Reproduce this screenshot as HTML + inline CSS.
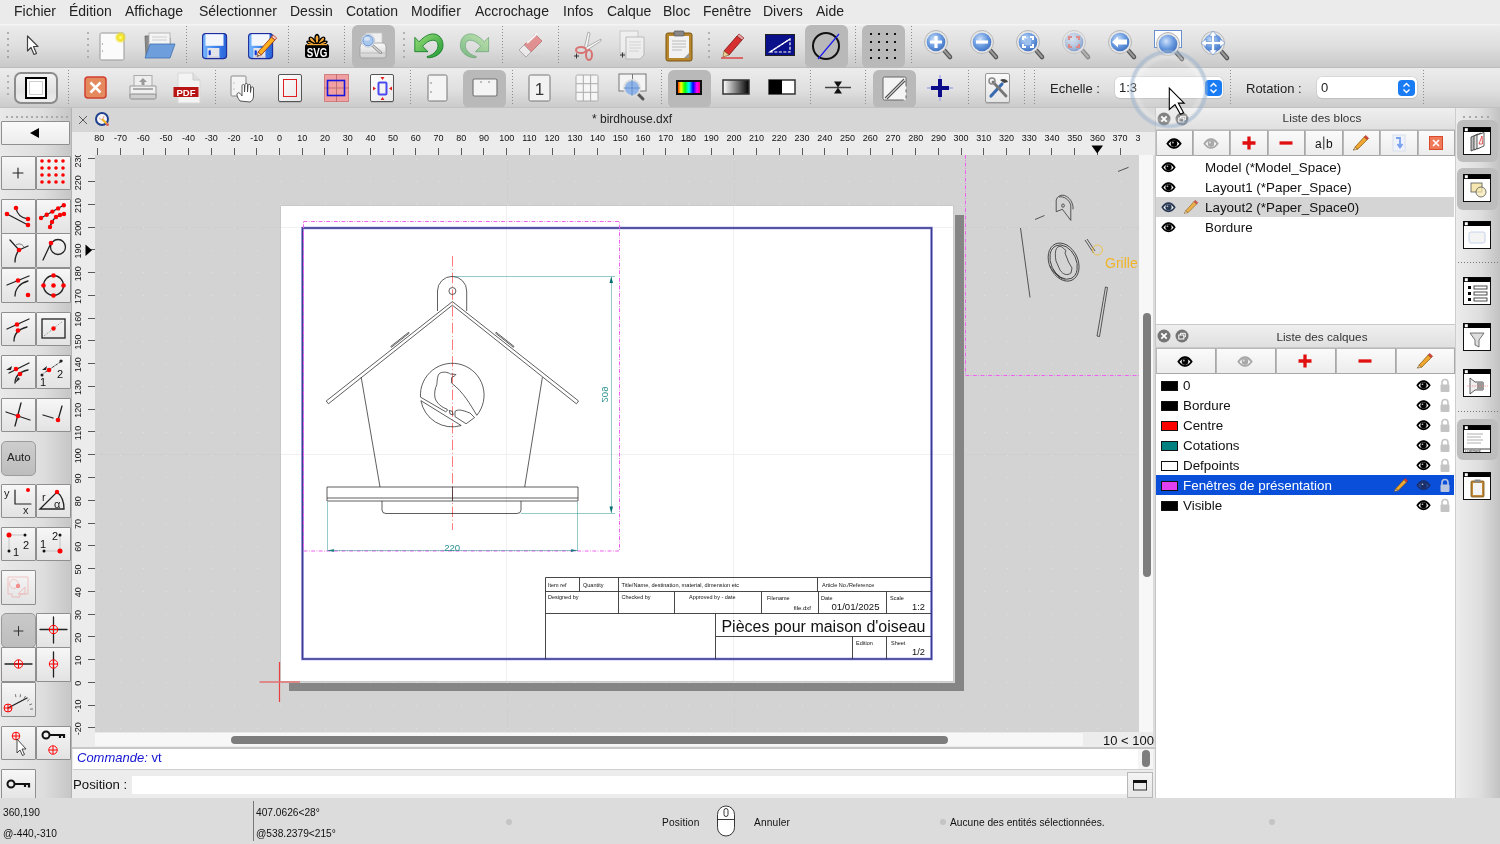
<!DOCTYPE html><html><head><meta charset="utf-8"><style>
*{margin:0;padding:0;box-sizing:border-box}
html,body{width:1500px;height:844px;overflow:hidden;background:#ececec;font-family:"Liberation Sans",sans-serif}
.t{position:absolute;white-space:nowrap;will-change:transform}
svg{position:absolute;overflow:visible;will-change:transform}
</style></head><body><div style="position:absolute;left:0px;top:0px;width:1500px;height:24px;background:#ebebeb"></div>
<div class="t" style="left:14px;top:4.45px;font-size:14px;line-height:14px;color:#222;">Fichier</div>
<div class="t" style="left:69px;top:4.45px;font-size:14px;line-height:14px;color:#222;">Édition</div>
<div class="t" style="left:125px;top:4.45px;font-size:14px;line-height:14px;color:#222;">Affichage</div>
<div class="t" style="left:199px;top:4.45px;font-size:14px;line-height:14px;color:#222;">Sélectionner</div>
<div class="t" style="left:290px;top:4.45px;font-size:14px;line-height:14px;color:#222;">Dessin</div>
<div class="t" style="left:346px;top:4.45px;font-size:14px;line-height:14px;color:#222;">Cotation</div>
<div class="t" style="left:411px;top:4.45px;font-size:14px;line-height:14px;color:#222;">Modifier</div>
<div class="t" style="left:475px;top:4.45px;font-size:14px;line-height:14px;color:#222;">Accrochage</div>
<div class="t" style="left:563px;top:4.45px;font-size:14px;line-height:14px;color:#222;">Infos</div>
<div class="t" style="left:607px;top:4.45px;font-size:14px;line-height:14px;color:#222;">Calque</div>
<div class="t" style="left:663px;top:4.45px;font-size:14px;line-height:14px;color:#222;">Bloc</div>
<div class="t" style="left:703px;top:4.45px;font-size:14px;line-height:14px;color:#222;">Fenêtre</div>
<div class="t" style="left:763px;top:4.45px;font-size:14px;line-height:14px;color:#222;">Divers</div>
<div class="t" style="left:816px;top:4.45px;font-size:14px;line-height:14px;color:#222;">Aide</div>
<div style="position:absolute;left:0px;top:24px;width:1500px;height:44px;background:linear-gradient(to bottom,#f4f4f4 0,#f4f4f4 1px,#ebebeb 2px,#dfdfdf 50%,#c9c9c9 100%);border-bottom:1px solid #bcbcbc"></div>
<div style="position:absolute;left:7px;top:32px;width:2px;height:2px;background:#9a9a9a;border-radius:1px"></div><div style="position:absolute;left:7px;top:38px;width:2px;height:2px;background:#9a9a9a;border-radius:1px"></div><div style="position:absolute;left:7px;top:44px;width:2px;height:2px;background:#9a9a9a;border-radius:1px"></div><div style="position:absolute;left:7px;top:50px;width:2px;height:2px;background:#9a9a9a;border-radius:1px"></div><div style="position:absolute;left:7px;top:56px;width:2px;height:2px;background:#9a9a9a;border-radius:1px"></div>
<svg style="position:absolute;left:26px;top:35px;" width="14" height="22" viewBox="0 0 14 22"><path d="M1.5 1 L1.5 16 L5 12.5 L8 19.5 L10.5 18.5 L7.5 11.5 L12 11.5 Z" fill="#fff" stroke="#444" stroke-width="1.2" stroke-linejoin="round"/></svg>
<div style="position:absolute;left:87px;top:32px;width:2px;height:2px;background:#a0a0a0;border-radius:1px"></div><div style="position:absolute;left:87px;top:38px;width:2px;height:2px;background:#a0a0a0;border-radius:1px"></div><div style="position:absolute;left:87px;top:44px;width:2px;height:2px;background:#a0a0a0;border-radius:1px"></div><div style="position:absolute;left:87px;top:50px;width:2px;height:2px;background:#a0a0a0;border-radius:1px"></div><div style="position:absolute;left:87px;top:56px;width:2px;height:2px;background:#a0a0a0;border-radius:1px"></div>
<svg style="position:absolute;left:99px;top:31px;" width="28" height="30" viewBox="0 0 28 30"><defs><radialGradient id="glow"><stop offset="0" stop-color="#ffff80"/><stop offset="0.5" stop-color="#f0e020"/><stop offset="1" stop-color="#f0e020" stop-opacity="0"/></radialGradient></defs>
<rect x="1" y="2" width="24" height="27" rx="1.5" fill="#f6f6f6" stroke="#9a9a9a"/><rect x="2" y="3" width="22" height="25" fill="#fbfbfb"/>
<circle cx="3.5" cy="13" r="0.7" fill="#999"/><circle cx="3.5" cy="20" r="0.7" fill="#999"/>
<circle cx="21.5" cy="6.5" r="6" fill="url(#glow)"/></svg>
<svg style="position:absolute;left:142px;top:32px;" width="34" height="28" viewBox="0 0 34 28"><path d="M3 4 L14 4 L16 6 L28 6 L28 24 L4 24 Z" fill="#8a8a8a" stroke="#666" stroke-width="0.8"/>
<rect x="7" y="1" width="21" height="14" fill="#f4f4f4" stroke="#aaa" stroke-width="0.8"/><line x1="10" y1="5" x2="25" y2="5" stroke="#ccc"/><line x1="10" y1="8" x2="25" y2="8" stroke="#ccc"/>
<path d="M8 12 L33 12 L28 26 L3 26 Z" fill="#6e9fdc" stroke="#3f6fb0" stroke-width="0.8"/></svg>
<div style="position:absolute;left:186px;top:26px;width:1px;height:39px;background:repeating-linear-gradient(to bottom,#8c8c8c 0 1px,transparent 1px 3px)"></div>
<svg style="position:absolute;left:202px;top:33px;" width="30" height="28" viewBox="0 0 30 28"><defs><linearGradient id="fg202" x1="0" y1="0" x2="1" y2="0"><stop offset="0" stop-color="#7ab8ff"/><stop offset="0.5" stop-color="#3f86f0"/><stop offset="1" stop-color="#2a64d8"/></linearGradient></defs>
<rect x="0.6" y="0.6" width="24" height="25" rx="3" fill="url(#fg202)" stroke="#1c2c9c" stroke-width="1.1"/>
<rect x="3.5" y="1.2" width="18" height="11.6" fill="#f4f6fd"/><rect x="5.4" y="15" width="12" height="10" fill="#e4e4ea"/><rect x="6.6" y="17.2" width="2.2" height="5" rx="0.8" fill="#0a3ad8"/><rect x="5.4" y="23.5" width="12" height="1.5" fill="#c8c8d8"/></svg>
<svg style="position:absolute;left:248px;top:33px;" width="30" height="28" viewBox="0 0 30 28"><defs><linearGradient id="fg248" x1="0" y1="0" x2="1" y2="0"><stop offset="0" stop-color="#7ab8ff"/><stop offset="0.5" stop-color="#3f86f0"/><stop offset="1" stop-color="#2a64d8"/></linearGradient></defs>
<rect x="0.6" y="0.6" width="24" height="25" rx="3" fill="url(#fg248)" stroke="#1c2c9c" stroke-width="1.1"/>
<rect x="3.5" y="1.2" width="18" height="11.6" fill="#f4f6fd"/><rect x="5.4" y="15" width="12" height="10" fill="#e4e4ea"/><rect x="6.6" y="17.2" width="2.2" height="5" rx="0.8" fill="#0a3ad8"/><rect x="5.4" y="23.5" width="12" height="1.5" fill="#c8c8d8"/><path d="M10 19 L23.5 4 L27 7 L13.2 22 Z" fill="#ffb020" stroke="#8a2a10" stroke-width="0.8"/><path d="M23.5 4 L25.2 2 L28.7 5 L27 7 Z" fill="#f0d0c0" stroke="#b03020" stroke-width="0.8"/><path d="M10 19 L13.2 22 L9 23.5 Z" fill="#f8e0b0" stroke="#8a2a10" stroke-width="0.6"/><path d="M9 23.5 L10.3 21.8 L10.8 22.8 Z" fill="#222"/></svg>
<div style="position:absolute;left:288px;top:26px;width:1px;height:39px;background:repeating-linear-gradient(to bottom,#8c8c8c 0 1px,transparent 1px 3px)"></div>
<svg style="position:absolute;left:300px;top:30px;" width="36" height="32" viewBox="0 0 36 32"><g transform="translate(-300 -30)">
<g fill="#f7a934" stroke="#000" stroke-width="1.3" stroke-linejoin="round">
<path d="M317 45 C 314 41, 314.5 35, 317 34.5 C 319.5 35, 320 41, 317 45 Z"/>
<path d="M317 45 C 312 43.5, 308 40, 309.5 37.5 C 311.5 36, 315 40, 317 45 Z"/>
<path d="M317 45 C 322 43.5, 326 40, 324.5 37.5 C 322.5 36, 319 40, 317 45 Z"/>
<path d="M317 45 C 311 45, 306.5 43.5, 307 41.5 C 308.5 40, 313 42.5, 317 45 Z"/>
<path d="M317 45 C 323 45, 327.5 43.5, 327 41.5 C 325.5 40, 321 42.5, 317 45 Z"/>
</g>
<rect x="305" y="44" width="24" height="14" rx="2.5" fill="#000"/>
<rect x="307" y="44" width="20" height="1.2" fill="#f7a934"/>
<text transform="translate(317 56.7) scale(0.78 1)" text-anchor="middle" font-family="Liberation Sans" font-weight="bold" font-size="12.6" fill="#fff">SVG</text>
</g></svg>
<div style="position:absolute;left:344px;top:26px;width:1px;height:39px;background:repeating-linear-gradient(to bottom,#8c8c8c 0 1px,transparent 1px 3px)"></div>
<div style="position:absolute;left:352px;top:25px;width:43px;height:43px;background:#b9b9b9;border-radius:6px"></div>
<svg style="position:absolute;left:355px;top:30px;" width="36" height="32" viewBox="0 0 36 32"><g transform="translate(-355 -30)">
<defs><linearGradient id="prg" x1="0" y1="0" x2="0" y2="1"><stop offset="0" stop-color="#fafafa"/><stop offset="1" stop-color="#d0d0d0"/></linearGradient></defs>
<rect x="366" y="33" width="16" height="13" fill="#f0f0f0" stroke="#c8c8c8" stroke-width="0.8"/>
<path d="M360 47 Q360 43 363 43 H383 Q386 43 386 47 V56 Q386 58 384 58 H362 Q360 58 360 56 Z" fill="url(#prg)" stroke="#9a9a9a" stroke-width="0.8"/>
<path d="M361 53 H385" stroke="#aaa" stroke-width="0.7"/>
<line x1="372" y1="45" x2="380.5" y2="52.5" stroke="#8a8a8a" stroke-width="3" stroke-linecap="round"/>
<line x1="372" y1="45" x2="380.5" y2="52.5" stroke="#d8d8d8" stroke-width="1.2" stroke-linecap="round"/>
<circle cx="368" cy="40.6" r="6.6" fill="#eef2f8" stroke="#b8c0cc" stroke-width="0.8"/>
<circle cx="368" cy="40.6" r="5.2" fill="#a9c6ec" stroke="#5d8fd0" stroke-width="0.9"/>
<ellipse cx="367" cy="38.8" rx="3" ry="2" fill="#dde9f8" opacity="0.8"/>
</g></svg>
<div style="position:absolute;left:403px;top:32px;width:2px;height:2px;background:#a0a0a0;border-radius:1px"></div><div style="position:absolute;left:403px;top:38px;width:2px;height:2px;background:#a0a0a0;border-radius:1px"></div><div style="position:absolute;left:403px;top:44px;width:2px;height:2px;background:#a0a0a0;border-radius:1px"></div><div style="position:absolute;left:403px;top:50px;width:2px;height:2px;background:#a0a0a0;border-radius:1px"></div><div style="position:absolute;left:403px;top:56px;width:2px;height:2px;background:#a0a0a0;border-radius:1px"></div>
<svg style="position:absolute;left:410px;top:28px;" width="90" height="36" viewBox="0 0 90 36"><defs><linearGradient id="ugr" x1="0" y1="0" x2="1" y2="1"><stop offset="0" stop-color="#9ade78"/><stop offset="1" stop-color="#1f9a35"/></linearGradient></defs><g transform="scale(0.06)"><path d="M80 155 L80 395 L300 395 L210 305 C260 250, 320 200, 400 205 C470 215, 480 300, 450 360 C410 430, 340 465, 285 475 L290 495 C380 500, 470 460, 520 390 C570 320, 560 190, 480 130 C400 70, 280 90, 150 230 Z" fill="url(#ugr)" stroke="#137a25" stroke-width="14"/><g transform="translate(1390 0) scale(-1 1)" opacity="0.5"><path d="M80 155 L80 395 L300 395 L210 305 C260 250, 320 200, 400 205 C470 215, 480 300, 450 360 C410 430, 340 465, 285 475 L290 495 C380 500, 470 460, 520 390 C570 320, 560 190, 480 130 C400 70, 280 90, 150 230 Z" fill="url(#ugr)" stroke="#137a25" stroke-width="14"/></g></g></svg>
<div style="position:absolute;left:502px;top:26px;width:1px;height:39px;background:repeating-linear-gradient(to bottom,#8c8c8c 0 1px,transparent 1px 3px)"></div>
<svg style="position:absolute;left:515px;top:30px;" width="32" height="32" viewBox="0 0 32 32"><g opacity="0.62"><ellipse cx="17" cy="26.5" rx="11" ry="1.6" fill="#d0d0d0"/><path d="M4 20 L20 4 L27 11 L11 27 Z" fill="#e06060" stroke="#a03030" stroke-width="0.8"/><path d="M4 20 L9 15 L16 22 L11 27 Z" fill="#f6f6f6" stroke="#888" stroke-width="0.8"/><path d="M12 13 L22 3.5" stroke="#fff" stroke-width="2.2"/></g></svg>
<div style="position:absolute;left:558px;top:26px;width:1px;height:39px;background:repeating-linear-gradient(to bottom,#8c8c8c 0 1px,transparent 1px 3px)"></div>
<svg style="position:absolute;left:572px;top:30px;" width="30" height="32" viewBox="0 0 30 32"><g opacity="0.75"><path d="M12 19 L16 2 L18 3 L15 19" fill="#fff" stroke="#888" stroke-width="0.8"/><path d="M13 18 L29 9 L29 11 L15 20" fill="#fff" stroke="#888" stroke-width="0.8"/>
<ellipse cx="9" cy="20" rx="5" ry="3" fill="none" stroke="#d85050" stroke-width="2"/><ellipse cx="17" cy="25" rx="3" ry="5" fill="none" stroke="#d85050" stroke-width="2"/></g>
<path d="M2 26 h5 M4.5 23.5 v5" stroke="#333" stroke-width="1"/></svg>
<svg style="position:absolute;left:617px;top:30px;" width="32" height="32" viewBox="0 0 32 32"><g opacity="0.7"><rect x="3" y="1" width="18" height="22" fill="#f4f4f4" stroke="#bbb"/><path d="M9 7 L27 7 L27 25 L23 29 L9 29 Z" fill="#f6f6f6" stroke="#aaa"/><path d="M12 12h12M12 15h12M12 18h12M12 21h10" stroke="#ccc"/></g>
<path d="M3 25 h5 M5.5 22.5 v5" stroke="#333" stroke-width="1"/></svg>
<svg style="position:absolute;left:664px;top:30px;" width="30" height="32" viewBox="0 0 30 32"><rect x="2" y="3" width="26" height="28" rx="2" fill="#b8862c" stroke="#7a5510"/><rect x="5" y="6" width="20" height="22" fill="#f2f2f2"/>
<rect x="10" y="1" width="10" height="5" rx="1" fill="#888" stroke="#555" stroke-width="0.7"/><path d="M8 11h14M8 14h14M8 17h14M8 20h10" stroke="#bbb"/><path d="M20 28 L25 23 L25 28 Z" fill="#999"/></svg>
<div style="position:absolute;left:708px;top:32px;width:2px;height:2px;background:#a0a0a0;border-radius:1px"></div><div style="position:absolute;left:708px;top:38px;width:2px;height:2px;background:#a0a0a0;border-radius:1px"></div><div style="position:absolute;left:708px;top:44px;width:2px;height:2px;background:#a0a0a0;border-radius:1px"></div><div style="position:absolute;left:708px;top:50px;width:2px;height:2px;background:#a0a0a0;border-radius:1px"></div><div style="position:absolute;left:708px;top:56px;width:2px;height:2px;background:#a0a0a0;border-radius:1px"></div>
<svg style="position:absolute;left:720px;top:33px;" width="28" height="26" viewBox="0 0 28 26"><path d="M4 18 L17 3 L22 7 L9 22 Z" fill="#d83030" stroke="#7a1010" stroke-width="0.8"/><path d="M17 3 L19 1 L24 5 L22 7 Z" fill="#e8a0a0" stroke="#7a1010" stroke-width="0.6"/><path d="M4 18 L9 22 L3 24 Z" fill="#f0d0a0" stroke="#7a5010" stroke-width="0.6"/><path d="M1 25 h22" stroke="#e02020" stroke-width="1.2"/></svg>
<svg style="position:absolute;left:765px;top:34px;" width="30" height="24" viewBox="0 0 30 24"><rect x="0.5" y="0.5" width="29" height="21" fill="#0a0f8a" stroke="#222" stroke-width="1"/><path d="M5 18 L25 5 L25 18 Z" fill="none" stroke="#fff" stroke-width="1.2" stroke-dasharray="3 1.5"/><path d="M5 18 L25 5" stroke="#fff" stroke-width="1.3"/></svg>
<div style="position:absolute;left:805px;top:25px;width:43px;height:43px;background:#b9b9b9;border-radius:6px"></div>
<svg style="position:absolute;left:811px;top:31px;" width="32" height="30" viewBox="0 0 32 30"><circle cx="15" cy="15" r="13" fill="none" stroke="#111" stroke-width="2"/><line x1="7" y1="28" x2="28" y2="3" stroke="#1a1af0" stroke-width="1.2"/></svg>
<div style="position:absolute;left:855px;top:26px;width:1px;height:39px;background:repeating-linear-gradient(to bottom,#8c8c8c 0 1px,transparent 1px 3px)"></div>
<div style="position:absolute;left:862px;top:25px;width:43px;height:43px;background:#b9b9b9;border-radius:6px"></div>
<svg style="position:absolute;left:862px;top:25px;" width="43" height="43" viewBox="0 0 43 43"><rect x="8" y="8" width="2" height="2" fill="#111"/><rect x="8" y="16" width="2" height="2" fill="#111"/><rect x="8" y="24" width="2" height="2" fill="#111"/><rect x="8" y="32" width="2" height="2" fill="#111"/><rect x="16" y="8" width="2" height="2" fill="#111"/><rect x="16" y="16" width="2" height="2" fill="#111"/><rect x="16" y="24" width="2" height="2" fill="#111"/><rect x="16" y="32" width="2" height="2" fill="#111"/><rect x="24" y="8" width="2" height="2" fill="#111"/><rect x="24" y="16" width="2" height="2" fill="#111"/><rect x="24" y="24" width="2" height="2" fill="#111"/><rect x="24" y="32" width="2" height="2" fill="#111"/><rect x="32" y="8" width="2" height="2" fill="#111"/><rect x="32" y="16" width="2" height="2" fill="#111"/><rect x="32" y="24" width="2" height="2" fill="#111"/><rect x="32" y="32" width="2" height="2" fill="#111"/></svg>
<div style="position:absolute;left:911px;top:26px;width:1px;height:39px;background:repeating-linear-gradient(to bottom,#8c8c8c 0 1px,transparent 1px 3px)"></div>
<svg style="position:absolute;left:922.5px;top:29px;" width="30" height="30" viewBox="0 0 30 30">
<defs><radialGradient id="mg935" cx="40%" cy="35%" r="70%"><stop offset="0" stop-color="#cfe2fa"/><stop offset="0.55" stop-color="#6a9be0"/><stop offset="1" stop-color="#3d6fc0"/></radialGradient></defs>
<line x1="20" y1="20" x2="27" y2="28" stroke="#555" stroke-width="4.5" stroke-linecap="round"/>
<line x1="20" y1="20" x2="27" y2="28" stroke="#999" stroke-width="2" stroke-linecap="round"/>
<circle cx="13" cy="13" r="11.5" fill="#e6e6e6" stroke="#b5b5b5" stroke-width="1"/>
<circle cx="13" cy="13" r="9.3" fill="url(#mg935)"/>
<path d="M13 7 V19 M7 13 H19" stroke="#fff" stroke-width="3.2"/></svg>
<svg style="position:absolute;left:968.5px;top:29px;" width="30" height="30" viewBox="0 0 30 30">
<defs><radialGradient id="mg981" cx="40%" cy="35%" r="70%"><stop offset="0" stop-color="#cfe2fa"/><stop offset="0.55" stop-color="#6a9be0"/><stop offset="1" stop-color="#3d6fc0"/></radialGradient></defs>
<line x1="20" y1="20" x2="27" y2="28" stroke="#555" stroke-width="4.5" stroke-linecap="round"/>
<line x1="20" y1="20" x2="27" y2="28" stroke="#999" stroke-width="2" stroke-linecap="round"/>
<circle cx="13" cy="13" r="11.5" fill="#e6e6e6" stroke="#b5b5b5" stroke-width="1"/>
<circle cx="13" cy="13" r="9.3" fill="url(#mg981)"/>
<path d="M7 13 H19" stroke="#fff" stroke-width="3.2"/></svg>
<svg style="position:absolute;left:1014.5px;top:29px;" width="30" height="30" viewBox="0 0 30 30">
<defs><radialGradient id="mg1027" cx="40%" cy="35%" r="70%"><stop offset="0" stop-color="#cfe2fa"/><stop offset="0.55" stop-color="#6a9be0"/><stop offset="1" stop-color="#3d6fc0"/></radialGradient></defs>
<line x1="20" y1="20" x2="27" y2="28" stroke="#555" stroke-width="4.5" stroke-linecap="round"/>
<line x1="20" y1="20" x2="27" y2="28" stroke="#999" stroke-width="2" stroke-linecap="round"/>
<circle cx="13" cy="13" r="11.5" fill="#e6e6e6" stroke="#b5b5b5" stroke-width="1"/>
<circle cx="13" cy="13" r="9.3" fill="url(#mg1027)"/>
<path d="M8 11 V8 H11 M15 8 H18 V11 M18 15 V18 H15 M11 18 H8 V15" fill="none" stroke="#fff" stroke-width="2"/><rect x="10" y="10" width="6" height="6" fill="#9cc0ee"/></svg>
<svg style="position:absolute;left:1060.5px;top:29px;opacity:0.6;" width="30" height="30" viewBox="0 0 30 30">
<defs><radialGradient id="mg1073" cx="40%" cy="35%" r="70%"><stop offset="0" stop-color="#cfe2fa"/><stop offset="0.55" stop-color="#9cb9e0"/><stop offset="1" stop-color="#3d6fc0"/></radialGradient></defs>
<line x1="20" y1="20" x2="27" y2="28" stroke="#555" stroke-width="4.5" stroke-linecap="round"/>
<line x1="20" y1="20" x2="27" y2="28" stroke="#999" stroke-width="2" stroke-linecap="round"/>
<circle cx="13" cy="13" r="11.5" fill="#e6e6e6" stroke="#b5b5b5" stroke-width="1"/>
<circle cx="13" cy="13" r="9.3" fill="url(#mg1073)"/>
<path d="M8 11 V8 H11 M15 8 H18 V11 M18 15 V18 H15 M11 18 H8 V15" fill="none" stroke="#e05050" stroke-width="2"/></svg>
<svg style="position:absolute;left:1106.5px;top:29px;" width="30" height="30" viewBox="0 0 30 30">
<defs><radialGradient id="mg1119" cx="40%" cy="35%" r="70%"><stop offset="0" stop-color="#cfe2fa"/><stop offset="0.55" stop-color="#6a9be0"/><stop offset="1" stop-color="#3d6fc0"/></radialGradient></defs>
<line x1="20" y1="20" x2="27" y2="28" stroke="#555" stroke-width="4.5" stroke-linecap="round"/>
<line x1="20" y1="20" x2="27" y2="28" stroke="#999" stroke-width="2" stroke-linecap="round"/>
<circle cx="13" cy="13" r="11.5" fill="#e6e6e6" stroke="#b5b5b5" stroke-width="1"/>
<circle cx="13" cy="13" r="9.3" fill="url(#mg1119)"/>
<path d="M5 13 L11 7.5 V10.5 H20 V15.5 H11 V18.5 Z" fill="#fff"/></svg>
<svg style="position:absolute;left:1154px;top:30px;" width="29" height="18" viewBox="0 0 29 18"><rect x="0.5" y="0.5" width="27" height="17" fill="#fff" stroke="#6a8fd0"/></svg>
<svg style="position:absolute;left:1154.5px;top:31px;" width="30" height="30" viewBox="0 0 30 30">
<defs><radialGradient id="mg1167" cx="40%" cy="35%" r="70%"><stop offset="0" stop-color="#cfe2fa"/><stop offset="0.55" stop-color="#6a9be0"/><stop offset="1" stop-color="#3d6fc0"/></radialGradient></defs>
<line x1="20" y1="20" x2="27" y2="28" stroke="#555" stroke-width="4.5" stroke-linecap="round"/>
<line x1="20" y1="20" x2="27" y2="28" stroke="#999" stroke-width="2" stroke-linecap="round"/>
<circle cx="13" cy="13" r="11.5" fill="#e6e6e6" stroke="#b5b5b5" stroke-width="1"/>
<circle cx="13" cy="13" r="9.3" fill="url(#mg1167)"/>
</svg>
<svg style="position:absolute;left:1199.5px;top:30px;" width="30" height="30" viewBox="0 0 30 30">
<defs><radialGradient id="mg1212" cx="40%" cy="35%" r="70%"><stop offset="0" stop-color="#cfe2fa"/><stop offset="0.55" stop-color="#6a9be0"/><stop offset="1" stop-color="#3d6fc0"/></radialGradient></defs>
<line x1="20" y1="20" x2="27" y2="28" stroke="#555" stroke-width="4.5" stroke-linecap="round"/>
<line x1="20" y1="20" x2="27" y2="28" stroke="#999" stroke-width="2" stroke-linecap="round"/>
<circle cx="13" cy="13" r="11.5" fill="#e6e6e6" stroke="#b5b5b5" stroke-width="1"/>
<circle cx="13" cy="13" r="9.3" fill="url(#mg1212)"/>
<path d="M13 1 L17 6 H14.5 V11.5 H20 V9 L25 13 L20 17 V14.5 H14.5 V20 H17 L13 25 L9 20 H11.5 V14.5 H6 V17 L1 13 L6 9 V11.5 H11.5 V6 H9 Z" fill="#fff" stroke="#5a8ad0" stroke-width="0.6"/></svg>
<div style="position:absolute;left:0px;top:68px;width:1500px;height:40px;background:linear-gradient(to bottom,#ececec 0%,#e0e0e0 55%,#cbcbcb 100%);border-bottom:1px solid #c0c0c0"></div>
<div style="position:absolute;left:7px;top:75px;width:2px;height:2px;background:#a0a0a0;border-radius:1px"></div><div style="position:absolute;left:7px;top:81px;width:2px;height:2px;background:#a0a0a0;border-radius:1px"></div><div style="position:absolute;left:7px;top:87px;width:2px;height:2px;background:#a0a0a0;border-radius:1px"></div><div style="position:absolute;left:7px;top:93px;width:2px;height:2px;background:#a0a0a0;border-radius:1px"></div>
<div style="position:absolute;left:14px;top:72px;width:44px;height:32px;border:2px solid #8c8c8c;border-radius:7px;background:linear-gradient(to bottom,#f2f2f2,#e2e2e2 60%,#ececec)"></div>
<div style="position:absolute;left:25px;top:77px;width:22px;height:22px;border:2px solid #000;background:#fff;box-shadow:inset 0 0 0 2px #fff, inset 0 0 0 3px #cfcfcf"></div>
<div style="position:absolute;left:68px;top:70px;width:1px;height:35px;background:repeating-linear-gradient(to bottom,#8c8c8c 0 1px,transparent 1px 3px)"></div>
<svg style="position:absolute;left:84px;top:76px;" width="24" height="24" viewBox="0 0 24 24"><rect x="1" y="1" width="21" height="21" rx="3" fill="#e48a5e" stroke="#cf4030" stroke-width="1.5"/><path d="M6.5 6.5 L16.5 16.5 M16.5 6.5 L6.5 16.5" stroke="#fff" stroke-width="2.6"/></svg>
<svg style="position:absolute;left:128px;top:74px;" width="30" height="28" viewBox="0 0 30 28"><rect x="6" y="1.5" width="18" height="12" fill="#eee" stroke="#aaa"/><path d="M15 4 L19 8 H16.5 V11 H13.5 V8 H11 Z" fill="#999"/>
<path d="M2 12 H28 V22 H2 Z" fill="#f0f0f0" stroke="#999"/><rect x="2" y="20" width="26" height="5" rx="1.5" fill="#cfcfcf" stroke="#8a8a8a"/><path d="M5 15 H25" stroke="#666"/></svg>
<svg style="position:absolute;left:173px;top:72px;" width="30" height="32" viewBox="0 0 30 32"><path d="M5 1 H20 L27 8 V31 H5 Z" fill="#f3f3f3" stroke="#d8d8d8"/><path d="M20 1 V8 H27" fill="#e0e0e0" stroke="#ccc"/>
<rect x="0.5" y="15" width="25" height="10" fill="#b81414"/><text x="13" y="23.6" text-anchor="middle" font-family="Liberation Sans" font-weight="bold" font-size="9.5" fill="#fff">PDF</text></svg>
<div style="position:absolute;left:215px;top:70px;width:1px;height:35px;background:repeating-linear-gradient(to bottom,#8c8c8c 0 1px,transparent 1px 3px)"></div>
<svg style="position:absolute;left:230px;top:75px;" width="28" height="28" viewBox="0 0 28 28"><rect x="1" y="1" width="15" height="20" rx="1" fill="#f4f4f4" stroke="#8a8a8a"/><circle cx="4" cy="8" r="0.6" fill="#888"/><circle cx="4" cy="14" r="0.6" fill="#888"/>
<path d="M10 26 C 7 22, 6 19, 8 18 C 10 17, 11 20, 12 21 L 12 11 C 12 9, 14.5 9, 14.5 11 L 14.5 17 L 15 9.5 C 15 8, 17.5 8, 17.5 9.5 L 17.5 17 L 18 10.5 C 18 9, 20.5 9, 20.5 10.5 L 20.5 17.5 L 21 13 C 21 11.5, 23.5 11.5, 23.5 13 L 23.5 21 C 23.5 24, 22 26, 20 27 Z" fill="#fff" stroke="#444" stroke-width="0.9"/></svg>
<div style="position:absolute;left:278px;top:74px;width:24px;height:28px;background:linear-gradient(135deg,#fff,#e6e6e6);border:1px solid #555;border-radius:2px;box-shadow:0 1px 0 rgba(0,0,0,0.12)"><div style="position:absolute;left:4px;top:4px;width:14px;height:18px;border:1.5px solid #e02020"></div></div>
<svg style="position:absolute;left:324px;top:74px;" width="25" height="28" viewBox="0 0 25 28"><rect x="0.5" y="0.5" width="24" height="27" fill="#f0a0a0" stroke="#d08080"/><path d="M12.5 0 V28 M0 14 H25" stroke="#c07070" stroke-width="1"/><rect x="3.5" y="6.5" width="17" height="15" fill="none" stroke="#1515e0" stroke-width="1.6"/></svg>
<div style="position:absolute;left:370px;top:74px;width:24px;height:28px;background:linear-gradient(135deg,#fff,#e8e8e8);border:1px solid #555;border-radius:2px;box-shadow:0 1px 0 rgba(0,0,0,0.12)"><svg style="left:0;top:0" width="24" height="28"><rect x="7.5" y="7.5" width="8" height="12" fill="none" stroke="#4a4af0" stroke-width="2" rx="1"/>
<path d="M9.5 2 H13.5 L11.5 5 Z M9.5 25 H13.5 L11.5 22 Z M2 11.5 V15.5 L5 13.5 Z M21 11.5 V15.5 L18 13.5 Z" fill="#e02020"/></svg></div>
<div style="position:absolute;left:410px;top:70px;width:1px;height:35px;background:repeating-linear-gradient(to bottom,#8c8c8c 0 1px,transparent 1px 3px)"></div>
<svg style="position:absolute;left:427px;top:74px;" width="22" height="28" viewBox="0 0 22 28"><rect x="1" y="1" width="19" height="26" rx="1.5" fill="#f4f4f4" stroke="#777"/><circle cx="4" cy="9" r="0.8" fill="#777"/><circle cx="4" cy="18" r="0.8" fill="#777"/></svg>
<div style="position:absolute;left:463px;top:70px;width:43px;height:38px;background:#b9b9b9;border-radius:6px"></div>
<svg style="position:absolute;left:472px;top:78px;" width="26" height="20" viewBox="0 0 26 20"><rect x="1" y="1" width="24" height="17" rx="1.5" fill="#f4f4f4" stroke="#777" stroke-width="1.2"/><circle cx="9" cy="4" r="0.8" fill="#777"/><circle cx="17" cy="4" r="0.8" fill="#777"/></svg>
<div style="position:absolute;left:512px;top:70px;width:1px;height:35px;background:repeating-linear-gradient(to bottom,#8c8c8c 0 1px,transparent 1px 3px)"></div>
<svg style="position:absolute;left:528px;top:74px;" width="24" height="28" viewBox="0 0 24 28"><rect x="1" y="1" width="21" height="26" rx="1.5" fill="#f2f2f2" stroke="#777"/><text x="11.5" y="21" text-anchor="middle" font-family="Liberation Sans" font-size="17" fill="#333">1</text></svg>
<svg style="position:absolute;left:575px;top:74px;" width="24" height="28" viewBox="0 0 24 28"><rect x="1" y="1" width="22" height="26" rx="1.5" fill="#f6f6f6" stroke="#aaa"/><path d="M8.3 1 V27 M15.6 1 V27 M1 9.7 H23 M1 18.3 H23" stroke="#aaa"/></svg>
<svg style="position:absolute;left:618px;top:73px;" width="30" height="30" viewBox="0 0 30 30"><rect x="1" y="1" width="27" height="17" fill="#f4f4f4" stroke="#777"/><path d="M14.5 1 V18" stroke="#777"/><line x1="18" y1="19" x2="25" y2="26" stroke="#555" stroke-width="3" stroke-linecap="round"/><circle cx="14" cy="15" r="8" fill="#8fb5e8" stroke="#ddd" stroke-width="1.8"/><path d="M6 15 H22 M14 7 V23" stroke="#5a85c8" stroke-width="0.8"/></svg>
<div style="position:absolute;left:661px;top:70px;width:1px;height:35px;background:repeating-linear-gradient(to bottom,#8c8c8c 0 1px,transparent 1px 3px)"></div>
<div style="position:absolute;left:668px;top:70px;width:43px;height:38px;background:#b9b9b9;border-radius:6px"></div>
<svg style="position:absolute;left:676px;top:80px;" width="26" height="15" viewBox="0 0 26 15"><defs><linearGradient id="spec"><stop offset="0" stop-color="#ff0000"/><stop offset="0.17" stop-color="#ffff00"/><stop offset="0.33" stop-color="#00ff00"/><stop offset="0.5" stop-color="#00ffff"/><stop offset="0.67" stop-color="#0000ff"/><stop offset="0.83" stop-color="#ff00ff"/><stop offset="1" stop-color="#ff0040"/></linearGradient></defs><rect x="1" y="1" width="24" height="13" fill="url(#spec)" stroke="#111" stroke-width="2"/></svg>
<svg style="position:absolute;left:722px;top:79px;" width="28" height="16" viewBox="0 0 28 16"><defs><linearGradient id="grd"><stop offset="0" stop-color="#fff"/><stop offset="1" stop-color="#000"/></linearGradient></defs><rect x="1" y="1" width="26" height="14" fill="url(#grd)" stroke="#333" stroke-width="1.5"/></svg>
<svg style="position:absolute;left:768px;top:79px;" width="28" height="16" viewBox="0 0 28 16"><rect x="1" y="1" width="26" height="14" fill="#fff" stroke="#333" stroke-width="1.5"/><rect x="1" y="1" width="13" height="14" fill="#000"/></svg>
<div style="position:absolute;left:810px;top:70px;width:1px;height:35px;background:repeating-linear-gradient(to bottom,#8c8c8c 0 1px,transparent 1px 3px)"></div>
<svg style="position:absolute;left:824px;top:80px;" width="28" height="16" viewBox="0 0 28 16"><path d="M1 7.5 H27" stroke="#444" stroke-width="1.5"/><path d="M10 1.5 H18 L14 7.5 Z M10 13.5 H18 L14 7.5 Z" fill="#111"/></svg>
<div style="position:absolute;left:865px;top:70px;width:1px;height:35px;background:repeating-linear-gradient(to bottom,#8c8c8c 0 1px,transparent 1px 3px)"></div>
<div style="position:absolute;left:873px;top:70px;width:43px;height:38px;background:#b9b9b9;border-radius:6px"></div>
<svg style="position:absolute;left:882px;top:76px;" width="26" height="26" viewBox="0 0 26 26"><rect x="1" y="1" width="23" height="23" rx="1.5" fill="#f4f4f4" stroke="#666" stroke-dasharray="30 3 3 3 3 3 100"/><path d="M3 22 L22 3 M5 23 L23 5" stroke="#555" stroke-width="1.1"/></svg>
<svg style="position:absolute;left:925px;top:73px;" width="30" height="30" viewBox="0 0 30 30"><path d="M2 15 H28 M15 2 V28" stroke="#a8a8f0" stroke-width="1.4"/><path d="M6 15 H24 M15 6 V24" stroke="#0a0a8a" stroke-width="4"/></svg>
<div style="position:absolute;left:968px;top:70px;width:1px;height:35px;background:repeating-linear-gradient(to bottom,#8c8c8c 0 1px,transparent 1px 3px)"></div>
<div style="position:absolute;left:985px;top:73px;width:25px;height:30px;background:linear-gradient(to bottom,#fafafa,#e4e4e4);border:1px solid #999;border-radius:2px;box-shadow:0 1px 0 rgba(0,0,0,0.12)"><svg style="left:0;top:0" width="25" height="30"><path d="M5 22 L16 10" stroke="#3a6ab0" stroke-width="3.2" stroke-linecap="round"/><path d="M7 8 L20 22" stroke="#777" stroke-width="2.8" stroke-linecap="round"/><path d="M14 6 C 17 4, 21 5, 22 8 L 18 9 Z" fill="#444"/><circle cx="6" cy="7" r="3" fill="none" stroke="#888" stroke-width="1.5"/></svg></div>
<div style="position:absolute;left:1024px;top:70px;width:1px;height:35px;background:repeating-linear-gradient(to bottom,#8c8c8c 0 1px,transparent 1px 3px)"></div>
<div style="position:absolute;left:1034px;top:70px;width:1px;height:35px;background:repeating-linear-gradient(to bottom,#8c8c8c 0 1px,transparent 1px 3px)"></div>
<div class="t" style="left:1050px;top:82.30px;font-size:13px;line-height:13px;color:#222;">Echelle :</div>
<div style="position:absolute;left:1115px;top:77px;width:108px;height:21px;background:#fff;border-radius:5px;box-shadow:0 0 0 0.5px #c8c8c8,0 1px 1px rgba(0,0,0,0.15)"></div>
<div class="t" style="left:1118.5px;top:80.50px;font-size:13px;line-height:13px;color:#222;">1:3</div>
<div style="position:absolute;left:1205px;top:80px;width:17px;height:16px;background:#1a7cf5;border-radius:4px"></div>
<svg style="position:absolute;left:1205px;top:80px;" width="17" height="16" viewBox="0 0 17 16"><path d="M5.5 6.5 L8.5 3.5 L11.5 6.5 M5.5 9.5 L8.5 12.5 L11.5 9.5" fill="none" stroke="#fff" stroke-width="1.4"/></svg>
<div style="position:absolute;left:1230px;top:70px;width:1px;height:35px;background:repeating-linear-gradient(to bottom,#8c8c8c 0 1px,transparent 1px 3px)"></div>
<div class="t" style="left:1246px;top:82.30px;font-size:13px;line-height:13px;color:#222;">Rotation :</div>
<div style="position:absolute;left:1317px;top:77px;width:100px;height:21px;background:#fff;border-radius:5px;box-shadow:0 0 0 0.5px #c8c8c8,0 1px 1px rgba(0,0,0,0.15)"></div>
<div class="t" style="left:1321px;top:80.50px;font-size:13px;line-height:13px;color:#222;">0</div>
<div style="position:absolute;left:1398px;top:80px;width:17px;height:16px;background:#1a7cf5;border-radius:4px"></div>
<svg style="position:absolute;left:1398px;top:80px;" width="17" height="16" viewBox="0 0 17 16"><path d="M5.5 6.5 L8.5 3.5 L11.5 6.5 M5.5 9.5 L8.5 12.5 L11.5 9.5" fill="none" stroke="#fff" stroke-width="1.4"/></svg>
<div style="position:absolute;left:1423px;top:70px;width:1px;height:35px;background:repeating-linear-gradient(to bottom,#8c8c8c 0 1px,transparent 1px 3px)"></div>
<div style="position:absolute;left:0px;top:108px;width:71px;height:690px;background:linear-gradient(to right,#e9e9e9 0%,#dedede 60%,#c6c6c6 100%)"></div>
<div style="position:absolute;left:71px;top:108px;width:1px;height:690px;background:#b4b4b4"></div>
<div style="position:absolute;left:6px;top:116px;width:2px;height:2px;background:#aaa"></div>
<div style="position:absolute;left:11px;top:116px;width:2px;height:2px;background:#aaa"></div>
<div style="position:absolute;left:16px;top:116px;width:2px;height:2px;background:#aaa"></div>
<div style="position:absolute;left:21px;top:116px;width:2px;height:2px;background:#aaa"></div>
<div style="position:absolute;left:26px;top:116px;width:2px;height:2px;background:#aaa"></div>
<div style="position:absolute;left:31px;top:116px;width:2px;height:2px;background:#aaa"></div>
<div style="position:absolute;left:36px;top:116px;width:2px;height:2px;background:#aaa"></div>
<div style="position:absolute;left:41px;top:116px;width:2px;height:2px;background:#aaa"></div>
<div style="position:absolute;left:46px;top:116px;width:2px;height:2px;background:#aaa"></div>
<div style="position:absolute;left:51px;top:116px;width:2px;height:2px;background:#aaa"></div>
<div style="position:absolute;left:56px;top:116px;width:2px;height:2px;background:#aaa"></div>
<div style="position:absolute;left:61px;top:116px;width:2px;height:2px;background:#aaa"></div>
<div style="position:absolute;left:66px;top:116px;width:2px;height:2px;background:#aaa"></div>
<div style="position:absolute;left:1px;top:121px;width:69px;height:24px;background:linear-gradient(to bottom,#fafafa,#ececec);border:1px solid #8f8f8f;border-radius:1px"></div>
<svg style="position:absolute;left:28px;top:127px;" width="14" height="12" viewBox="0 0 14 12"><path d="M2 6 L11 1 L11 11 Z" fill="#000"/></svg>
<div style="position:absolute;left:1px;top:156px;width:35px;height:34px;background:linear-gradient(to bottom,#f7f7f7,#ececec 50%,#e3e3e3);border:1px solid #8f8f8f;border-radius:1px"></div>
<svg style="position:absolute;left:1px;top:156px;" width="35" height="34" viewBox="0 0 35 34"><path d="M12 17 H22 M17 12 V22" fill="none" stroke="#222" stroke-width="1.1" stroke-linecap="round"/></svg>
<div style="position:absolute;left:36px;top:156px;width:35px;height:34px;background:linear-gradient(to bottom,#f7f7f7,#ececec 50%,#e3e3e3);border:1px solid #8f8f8f;border-radius:1px"></div>
<svg style="position:absolute;left:36px;top:156px;" width="35" height="34" viewBox="0 0 35 34"><circle cx="6" cy="5" r="1.8" fill="#f00"/><circle cx="6" cy="12" r="1.8" fill="#f00"/><circle cx="6" cy="19" r="1.8" fill="#f00"/><circle cx="6" cy="26" r="1.8" fill="#f00"/><circle cx="13" cy="5" r="1.8" fill="#f00"/><circle cx="13" cy="12" r="1.8" fill="#f00"/><circle cx="13" cy="19" r="1.8" fill="#f00"/><circle cx="13" cy="26" r="1.8" fill="#f00"/><circle cx="20" cy="5" r="1.8" fill="#f00"/><circle cx="20" cy="12" r="1.8" fill="#f00"/><circle cx="20" cy="19" r="1.8" fill="#f00"/><circle cx="20" cy="26" r="1.8" fill="#f00"/><circle cx="27" cy="5" r="1.8" fill="#f00"/><circle cx="27" cy="12" r="1.8" fill="#f00"/><circle cx="27" cy="19" r="1.8" fill="#f00"/><circle cx="27" cy="26" r="1.8" fill="#f00"/></svg>
<div style="position:absolute;left:1px;top:199px;width:35px;height:35px;background:linear-gradient(to bottom,#f7f7f7,#ececec 50%,#e3e3e3);border:1px solid #8f8f8f;border-radius:1px"></div>
<svg style="position:absolute;left:1px;top:199px;" width="35" height="35" viewBox="0 0 35 35"><path d="M6 15 L27 26" fill="none" stroke="#222" stroke-width="1.3" stroke-linecap="round"/><path d="M15 9 C 16 15, 20 19, 27 20" fill="none" stroke="#222" stroke-width="1.3" stroke-linecap="round"/><circle cx="6" cy="15" r="2.3" fill="#f00"/><circle cx="27" cy="26" r="2.3" fill="#f00"/><circle cx="15" cy="9" r="2.3" fill="#f00"/><circle cx="27" cy="20" r="2.3" fill="#f00"/></svg>
<div style="position:absolute;left:36px;top:199px;width:35px;height:35px;background:linear-gradient(to bottom,#f7f7f7,#ececec 50%,#e3e3e3);border:1px solid #8f8f8f;border-radius:1px"></div>
<svg style="position:absolute;left:36px;top:199px;" width="35" height="35" viewBox="0 0 35 35"><path d="M5 19 L28 6" fill="none" stroke="#222" stroke-width="1.3" stroke-linecap="round"/><path d="M14 28 C 16 20, 20 17, 28 15" fill="none" stroke="#222" stroke-width="1.3" stroke-linecap="round"/><circle cx="5.0" cy="19.0" r="2.2" fill="#f00"/><circle cx="10.7" cy="15.8" r="2.2" fill="#f00"/><circle cx="16.4" cy="12.6" r="2.2" fill="#f00"/><circle cx="22.1" cy="9.399999999999999" r="2.2" fill="#f00"/><circle cx="27.8" cy="6.199999999999999" r="2.2" fill="#f00"/><circle cx="14" cy="28" r="2.2" fill="#f00"/><circle cx="16" cy="23" r="2.2" fill="#f00"/><circle cx="20" cy="18" r="2.2" fill="#f00"/><circle cx="24" cy="16" r="2.2" fill="#f00"/><circle cx="28" cy="15" r="2.2" fill="#f00"/></svg>
<div style="position:absolute;left:1px;top:233px;width:35px;height:35px;background:linear-gradient(to bottom,#f7f7f7,#ececec 50%,#e3e3e3);border:1px solid #8f8f8f;border-radius:1px"></div>
<svg style="position:absolute;left:1px;top:233px;" width="35" height="35" viewBox="0 0 35 35"><path d="M9 7 L18 17 L27 13" fill="none" stroke="#222" stroke-width="1.3" stroke-linecap="round"/><path d="M18 17 C 15 21, 14 25, 14 29" fill="none" stroke="#222" stroke-width="1.3" stroke-linecap="round"/><path d="M15 12 C 18 10, 21 11, 23 14" fill="none" stroke="#444" stroke-width="0.7"/><circle cx="18" cy="17" r="2.3" fill="#f00"/></svg>
<div style="position:absolute;left:36px;top:233px;width:35px;height:35px;background:linear-gradient(to bottom,#f7f7f7,#ececec 50%,#e3e3e3);border:1px solid #8f8f8f;border-radius:1px"></div>
<svg style="position:absolute;left:36px;top:233px;" width="35" height="35" viewBox="0 0 35 35"><path d="M7 27 L15 10" fill="none" stroke="#222" stroke-width="1.3" stroke-linecap="round"/><circle cx="22" cy="14" r="7.5" fill="none" stroke="#222" stroke-width="1.3"/><circle cx="15" cy="10" r="2.3" fill="#f00"/></svg>
<div style="position:absolute;left:1px;top:268px;width:35px;height:35px;background:linear-gradient(to bottom,#f7f7f7,#ececec 50%,#e3e3e3);border:1px solid #8f8f8f;border-radius:1px"></div>
<svg style="position:absolute;left:1px;top:268px;" width="35" height="35" viewBox="0 0 35 35"><path d="M6 17 L28 8" fill="none" stroke="#222" stroke-width="1.3" stroke-linecap="round"/><path d="M14 28 C 14 21, 19 15, 27 13" fill="none" stroke="#222" stroke-width="1.3" stroke-linecap="round"/><circle cx="17" cy="12.5" r="2.3" fill="#f00"/><circle cx="27" cy="27" r="2.3" fill="#f00"/></svg>
<div style="position:absolute;left:36px;top:268px;width:35px;height:35px;background:linear-gradient(to bottom,#f7f7f7,#ececec 50%,#e3e3e3);border:1px solid #8f8f8f;border-radius:1px"></div>
<svg style="position:absolute;left:36px;top:268px;" width="35" height="35" viewBox="0 0 35 35"><circle cx="17.5" cy="17.5" r="10" fill="none" stroke="#222" stroke-width="1.3"/><circle cx="17.5" cy="17.5" r="2.3" fill="#f00"/><circle cx="17.5" cy="7.5" r="2.3" fill="#f00"/><circle cx="17.5" cy="27.5" r="2.3" fill="#f00"/><circle cx="7.5" cy="17.5" r="2.3" fill="#f00"/><circle cx="27.5" cy="17.5" r="2.3" fill="#f00"/></svg>
<div style="position:absolute;left:1px;top:312px;width:35px;height:34px;background:linear-gradient(to bottom,#f7f7f7,#ececec 50%,#e3e3e3);border:1px solid #8f8f8f;border-radius:1px"></div>
<svg style="position:absolute;left:1px;top:312px;" width="35" height="34" viewBox="0 0 35 34"><path d="M6 17 L28 7" fill="none" stroke="#222" stroke-width="1.3" stroke-linecap="round"/><path d="M13 29 C 13 22, 18 17, 26 15" fill="none" stroke="#222" stroke-width="1.3" stroke-linecap="round"/><circle cx="16" cy="12.5" r="2.3" fill="#f00"/><circle cx="17" cy="18.5" r="2.3" fill="#f00"/></svg>
<div style="position:absolute;left:36px;top:312px;width:35px;height:34px;background:linear-gradient(to bottom,#f7f7f7,#ececec 50%,#e3e3e3);border:1px solid #8f8f8f;border-radius:1px"></div>
<svg style="position:absolute;left:36px;top:312px;" width="35" height="34" viewBox="0 0 35 34"><rect x="6" y="7" width="23" height="19" fill="none" stroke="#222" stroke-width="1.3"/><path d="M8 24 L27 9" stroke="#888" stroke-width="0.8" stroke-dasharray="2 1.5"/><circle cx="17.5" cy="16.5" r="2.2" fill="#f00"/></svg>
<div style="position:absolute;left:1px;top:355px;width:35px;height:34px;background:linear-gradient(to bottom,#f7f7f7,#ececec 50%,#e3e3e3);border:1px solid #8f8f8f;border-radius:1px"></div>
<svg style="position:absolute;left:1px;top:355px;" width="35" height="34" viewBox="0 0 35 34"><path d="M8 18 L28 8" fill="none" stroke="#222" stroke-width="1.3" stroke-linecap="round"/><path d="M14 28 C 14 22, 18 17, 27 15" fill="none" stroke="#222" stroke-width="1.3" stroke-linecap="round"/><path d="M5 15 L11 11 L10 15 Z M14 28 L17 22 L19 24 Z" fill="#222"/><circle cx="15" cy="14" r="2.3" fill="#f00"/><circle cx="19" cy="19" r="2.3" fill="#f00"/></svg>
<div style="position:absolute;left:36px;top:355px;width:35px;height:34px;background:linear-gradient(to bottom,#f7f7f7,#ececec 50%,#e3e3e3);border:1px solid #8f8f8f;border-radius:1px"></div>
<svg style="position:absolute;left:36px;top:355px;" width="35" height="34" viewBox="0 0 35 34"><path d="M8 18 L26 6" fill="none" stroke="#333" stroke-width="1.0" stroke-linecap="round"/><path d="M8 18 L26 6" stroke="#fff" stroke-width="0.8" stroke-dasharray="2 2"/><path d="M6 15 L11 11 L10 15 Z" fill="#222"/><circle cx="13" cy="15" r="2.3" fill="#f00"/><circle cx="25" cy="6" r="1.6" fill="#222"/><circle cx="6" cy="20" r="1.5" fill="#222"/><text x="21" y="23" font-family="Liberation Sans" font-size="11" fill="#111">2</text><text x="4" y="31" font-family="Liberation Sans" font-size="11" fill="#111">1</text></svg>
<div style="position:absolute;left:1px;top:398px;width:35px;height:34px;background:linear-gradient(to bottom,#f7f7f7,#ececec 50%,#e3e3e3);border:1px solid #8f8f8f;border-radius:1px"></div>
<svg style="position:absolute;left:1px;top:398px;" width="35" height="34" viewBox="0 0 35 34"><path d="M5 14 L29 22" fill="none" stroke="#222" stroke-width="1.3" stroke-linecap="round"/><path d="M20 5 L14 28" fill="none" stroke="#222" stroke-width="1.3" stroke-linecap="round"/><circle cx="17" cy="18" r="2.3" fill="#f00"/></svg>
<div style="position:absolute;left:36px;top:398px;width:35px;height:34px;background:linear-gradient(to bottom,#f7f7f7,#ececec 50%,#e3e3e3);border:1px solid #8f8f8f;border-radius:1px"></div>
<svg style="position:absolute;left:36px;top:398px;" width="35" height="34" viewBox="0 0 35 34"><path d="M7 17 L17 20" fill="none" stroke="#222" stroke-width="1.3" stroke-linecap="round"/><path d="M26 8 L22 22" fill="none" stroke="#222" stroke-width="1.3" stroke-linecap="round"/><circle cx="22" cy="22" r="2.3" fill="#f00"/></svg>
<div style="position:absolute;left:1px;top:441px;width:35px;height:35px;background:linear-gradient(to bottom,#cdcdcd,#bdbdbd);border:1px solid #9c9c9c;border-radius:5px"></div>
<div class="t" style="left:7px;top:452.27px;font-size:11.5px;line-height:11.5px;color:#222;">Auto</div>
<div style="position:absolute;left:1px;top:484px;width:35px;height:34px;background:linear-gradient(to bottom,#f7f7f7,#ececec 50%,#e3e3e3);border:1px solid #8f8f8f;border-radius:1px"></div>
<svg style="position:absolute;left:1px;top:484px;" width="35" height="34" viewBox="0 0 35 34"><text x="3" y="13" font-family="Liberation Sans" font-size="11" fill="#222">y</text><text x="22" y="30" font-family="Liberation Sans" font-size="11" fill="#222">x</text><path d="M14 6 V20 H30" fill="none" stroke="#222" stroke-width="1.2" stroke-linecap="round"/><circle cx="27" cy="6" r="2" fill="#f00"/></svg>
<div style="position:absolute;left:36px;top:484px;width:35px;height:34px;background:linear-gradient(to bottom,#f7f7f7,#ececec 50%,#e3e3e3);border:1px solid #8f8f8f;border-radius:1px"></div>
<svg style="position:absolute;left:36px;top:484px;" width="35" height="34" viewBox="0 0 35 34"><path d="M4 25 L21 8 C 26 12, 28 18, 28 25 Z" fill="none" stroke="#222" stroke-width="1.3"/><text x="6" y="17" font-family="Liberation Sans" font-size="11" fill="#222">r</text><text x="18" y="24" font-family="Liberation Sans" font-size="11" fill="#222">α</text><circle cx="21" cy="8" r="2.2" fill="#f00"/></svg>
<div style="position:absolute;left:1px;top:527px;width:35px;height:34px;background:linear-gradient(to bottom,#f7f7f7,#ececec 50%,#e3e3e3);border:1px solid #8f8f8f;border-radius:1px"></div>
<svg style="position:absolute;left:1px;top:527px;" width="35" height="34" viewBox="0 0 35 34"><path d="M8 8 H24 M8 8 V24" fill="none" stroke="#bbb" stroke-width="0.8"/><circle cx="8" cy="8" r="2.5" fill="#f00"/><circle cx="24" cy="8" r="1.5" fill="#111"/><circle cx="8" cy="24" r="1.5" fill="#111"/><text x="12" y="29" font-family="Liberation Sans" font-size="11" fill="#111">1</text><text x="22" y="22" font-family="Liberation Sans" font-size="11" fill="#111">2</text></svg>
<div style="position:absolute;left:36px;top:527px;width:35px;height:34px;background:linear-gradient(to bottom,#f7f7f7,#ececec 50%,#e3e3e3);border:1px solid #8f8f8f;border-radius:1px"></div>
<svg style="position:absolute;left:36px;top:527px;" width="35" height="34" viewBox="0 0 35 34"><path d="M8 24 H24 V8" fill="none" stroke="#bbb" stroke-width="0.8"/><circle cx="24" cy="24" r="2.5" fill="#f00"/><circle cx="24" cy="8" r="1.5" fill="#111"/><circle cx="8" cy="24" r="1.5" fill="#111"/><text x="4" y="21" font-family="Liberation Sans" font-size="11" fill="#111">1</text><text x="16" y="13" font-family="Liberation Sans" font-size="11" fill="#111">2</text></svg>
<div style="position:absolute;left:1px;top:570px;width:35px;height:35px;background:linear-gradient(to bottom,#f7f7f7,#ececec 50%,#e3e3e3);border:1px solid #8f8f8f;border-radius:1px"></div>
<svg style="position:absolute;left:1px;top:570px;opacity:0.4" width="35" height="35" viewBox="0 0 35 35"><path d="M7 7 H27 V24 H19 V27 H11 V24 H7 Z" fill="none" stroke="#f07070" stroke-width="0.9"/><circle cx="13" cy="14" r="4.5" fill="none" stroke="#f07070" stroke-width="0.9"/><path d="M17 24 L24 17 V24 Z" fill="none" stroke="#f07070" stroke-width="0.9"/><circle cx="17" cy="16" r="2.2" fill="#f00"/></svg>
<div style="position:absolute;left:1px;top:613px;width:35px;height:35px;background:linear-gradient(to bottom,#c9c9c9,#bdbdbd);border:1px solid #9a9a9a;border-radius:5px"></div>
<svg style="position:absolute;left:1px;top:613px;" width="35" height="35" viewBox="0 0 35 35"><path d="M13 18 H22 M17.5 13.5 V22.5" fill="none" stroke="#333" stroke-width="1.0" stroke-linecap="round"/></svg>
<div style="position:absolute;left:36px;top:613px;width:35px;height:35px;background:linear-gradient(to bottom,#f7f7f7,#ececec 50%,#e3e3e3);border:1px solid #8f8f8f;border-radius:1px"></div>
<svg style="position:absolute;left:36px;top:613px;" width="35" height="35" viewBox="0 0 35 35"><path d="M4 16.5 H31 M17.5 4 V30" fill="none" stroke="#222" stroke-width="1.3" stroke-linecap="round"/><circle cx="17.5" cy="16.5" r="4.2" fill="none" stroke="#f00" stroke-width="1"/><path d="M13.3 16.5 H21.7 M17.5 12.3 V20.7" stroke="#f00" stroke-width="1"/></svg>
<div style="position:absolute;left:1px;top:647px;width:35px;height:35px;background:linear-gradient(to bottom,#f7f7f7,#ececec 50%,#e3e3e3);border:1px solid #8f8f8f;border-radius:1px"></div>
<svg style="position:absolute;left:1px;top:647px;" width="35" height="35" viewBox="0 0 35 35"><path d="M4 17 H31" fill="none" stroke="#222" stroke-width="1.3" stroke-linecap="round"/><circle cx="17.5" cy="17" r="4.2" fill="none" stroke="#f00" stroke-width="1"/><path d="M13.3 17 H21.7 M17.5 12.8 V21.2" stroke="#f00" stroke-width="1"/></svg>
<div style="position:absolute;left:36px;top:647px;width:35px;height:35px;background:linear-gradient(to bottom,#f7f7f7,#ececec 50%,#e3e3e3);border:1px solid #8f8f8f;border-radius:1px"></div>
<svg style="position:absolute;left:36px;top:647px;" width="35" height="35" viewBox="0 0 35 35"><path d="M17.5 5 V30" fill="none" stroke="#222" stroke-width="1.3" stroke-linecap="round"/><circle cx="17.5" cy="17" r="4.2" fill="none" stroke="#f00" stroke-width="1"/><path d="M13.3 17 H21.7 M17.5 12.8 V21.2" stroke="#f00" stroke-width="1"/></svg>
<div style="position:absolute;left:1px;top:682px;width:35px;height:35px;background:linear-gradient(to bottom,#f7f7f7,#ececec 50%,#e3e3e3);border:1px solid #8f8f8f;border-radius:1px"></div>
<svg style="position:absolute;left:1px;top:682px;" width="35" height="35" viewBox="0 0 35 35"><path d="M29.0 27.0 L32.0 27.0" stroke="#555" stroke-width="0.8"/><path d="M28.2763114494309 22.895758280091975 L31.095389311788626 21.869697850114967" stroke="#555" stroke-width="0.8"/><path d="M26.19253331742774 19.28654868376153 L28.490666646784668 17.35818585470191" stroke="#555" stroke-width="0.8"/><path d="M23.0 16.607695154586736 L24.5 14.009618943233422" stroke="#555" stroke-width="0.8"/><path d="M19.083778132003165 15.182306963853504 L19.604722665003955 12.227883704816879" stroke="#555" stroke-width="0.8"/><path d="M14.916221867996835 15.182306963853504 L14.395277334996045 12.227883704816879" stroke="#555" stroke-width="0.8"/><path d="M7 26 L26 16" fill="none" stroke="#222" stroke-width="1.4" stroke-linecap="round"/><circle cx="7" cy="26" r="4" fill="none" stroke="#f00" stroke-width="1"/><path d="M3 26 H11 M7 22 V30" stroke="#f00" stroke-width="1"/></svg>
<div style="position:absolute;left:1px;top:726px;width:35px;height:34px;background:linear-gradient(to bottom,#f7f7f7,#ececec 50%,#e3e3e3);border:1px solid #8f8f8f;border-radius:1px"></div>
<svg style="position:absolute;left:1px;top:726px;" width="35" height="34" viewBox="0 0 35 34"><circle cx="15" cy="10" r="3.8" fill="none" stroke="#f00" stroke-width="1"/><path d="M11.2 10 H18.8 M15 6.2 V13.8" stroke="#f00" stroke-width="1"/><path d="M16 13 L16 27 L19 24 L21.5 29.5 L23.5 28.5 L21 23 L25 23 Z" fill="#fff" stroke="#333" stroke-width="0.9"/></svg>
<div style="position:absolute;left:36px;top:726px;width:35px;height:34px;background:linear-gradient(to bottom,#f7f7f7,#ececec 50%,#e3e3e3);border:1px solid #8f8f8f;border-radius:1px"></div>
<svg style="position:absolute;left:36px;top:726px;" width="35" height="34" viewBox="0 0 35 34"><circle cx="10" cy="9" r="3.5" fill="none" stroke="#111" stroke-width="2"/><path d="M13.5 9 H28 V12 M24 9 V12" fill="none" stroke="#111" stroke-width="2.2"/><circle cx="17" cy="24" r="4.2" fill="none" stroke="#f00" stroke-width="1"/><path d="M12.8 24 H21.2 M17 19.8 V28.2" stroke="#f00" stroke-width="1"/></svg>
<div style="position:absolute;left:1px;top:769px;width:35px;height:34px;background:linear-gradient(to bottom,#f7f7f7,#ececec 50%,#e3e3e3);border:1px solid #8f8f8f;border-radius:1px"></div>
<svg style="position:absolute;left:1px;top:769px;" width="35" height="34" viewBox="0 0 35 34"><circle cx="10" cy="15" r="3.5" fill="none" stroke="#111" stroke-width="2"/><path d="M13.5 15 H28 V18.5 M24 15 V18" fill="none" stroke="#111" stroke-width="2.2"/></svg>
<div style="position:absolute;left:72px;top:107px;width:1083px;height:1px;background:#c2c2c2"></div>
<div style="position:absolute;left:72px;top:108px;width:1083px;height:24px;background:#d6d6d6"></div>
<svg style="position:absolute;left:78px;top:115px;" width="10" height="10" viewBox="0 0 10 10"><path d="M1 1 L9 9 M9 1 L1 9" stroke="#5a5a5a" stroke-width="1"/></svg>
<svg style="position:absolute;left:95px;top:112px;" width="15" height="15" viewBox="0 0 15 15"><circle cx="7" cy="7" r="6" fill="#f4f4f4" stroke="#1f3f8f" stroke-width="2"/><path d="M4 6 L7 8 M9 4 L8 7" stroke="#d08080" stroke-width="0.7"/><path d="M7 7 L12 12" stroke="#f0b020" stroke-width="2"/><circle cx="12.5" cy="12.5" r="1.5" fill="#e06060"/></svg>
<div class="t" style="left:332px;width:600px;text-align:center;top:113.14px;font-size:12px;line-height:12px;color:#222;">* birdhouse.dxf</div>
<div style="position:absolute;left:72px;top:132px;width:1068px;height:23px;background:#ececec"></div>
<div style="position:absolute;left:72px;top:155px;width:23px;height:591px;background:#ececec"></div>
<div style="position:absolute;left:94px;top:132px;width:1046px;height:23px;overflow:hidden"><svg style="left:-94px;top:-132px" width="1500" height="200"><path d="M97.5 148 V155" stroke="#5a5a5a" stroke-width="1"/><path d="M120.5 148 V155" stroke="#5a5a5a" stroke-width="1"/><path d="M143.5 148 V155" stroke="#5a5a5a" stroke-width="1"/><path d="M165.5 148 V155" stroke="#5a5a5a" stroke-width="1"/><path d="M188.5 148 V155" stroke="#5a5a5a" stroke-width="1"/><path d="M211.5 148 V155" stroke="#5a5a5a" stroke-width="1"/><path d="M234.5 148 V155" stroke="#5a5a5a" stroke-width="1"/><path d="M256.5 148 V155" stroke="#5a5a5a" stroke-width="1"/><path d="M279.5 148 V155" stroke="#5a5a5a" stroke-width="1"/><path d="M302.5 148 V155" stroke="#5a5a5a" stroke-width="1"/><path d="M324.5 148 V155" stroke="#5a5a5a" stroke-width="1"/><path d="M347.5 148 V155" stroke="#5a5a5a" stroke-width="1"/><path d="M370.5 148 V155" stroke="#5a5a5a" stroke-width="1"/><path d="M393.5 148 V155" stroke="#5a5a5a" stroke-width="1"/><path d="M415.5 148 V155" stroke="#5a5a5a" stroke-width="1"/><path d="M438.5 148 V155" stroke="#5a5a5a" stroke-width="1"/><path d="M461.5 148 V155" stroke="#5a5a5a" stroke-width="1"/><path d="M483.5 148 V155" stroke="#5a5a5a" stroke-width="1"/><path d="M506.5 148 V155" stroke="#5a5a5a" stroke-width="1"/><path d="M529.5 148 V155" stroke="#5a5a5a" stroke-width="1"/><path d="M552.5 148 V155" stroke="#5a5a5a" stroke-width="1"/><path d="M574.5 148 V155" stroke="#5a5a5a" stroke-width="1"/><path d="M597.5 148 V155" stroke="#5a5a5a" stroke-width="1"/><path d="M620.5 148 V155" stroke="#5a5a5a" stroke-width="1"/><path d="M643.5 148 V155" stroke="#5a5a5a" stroke-width="1"/><path d="M665.5 148 V155" stroke="#5a5a5a" stroke-width="1"/><path d="M688.5 148 V155" stroke="#5a5a5a" stroke-width="1"/><path d="M711.5 148 V155" stroke="#5a5a5a" stroke-width="1"/><path d="M733.5 148 V155" stroke="#5a5a5a" stroke-width="1"/><path d="M756.5 148 V155" stroke="#5a5a5a" stroke-width="1"/><path d="M779.5 148 V155" stroke="#5a5a5a" stroke-width="1"/><path d="M802.5 148 V155" stroke="#5a5a5a" stroke-width="1"/><path d="M824.5 148 V155" stroke="#5a5a5a" stroke-width="1"/><path d="M847.5 148 V155" stroke="#5a5a5a" stroke-width="1"/><path d="M870.5 148 V155" stroke="#5a5a5a" stroke-width="1"/><path d="M892.5 148 V155" stroke="#5a5a5a" stroke-width="1"/><path d="M915.5 148 V155" stroke="#5a5a5a" stroke-width="1"/><path d="M938.5 148 V155" stroke="#5a5a5a" stroke-width="1"/><path d="M961.5 148 V155" stroke="#5a5a5a" stroke-width="1"/><path d="M983.5 148 V155" stroke="#5a5a5a" stroke-width="1"/><path d="M1006.5 148 V155" stroke="#5a5a5a" stroke-width="1"/><path d="M1029.5 148 V155" stroke="#5a5a5a" stroke-width="1"/><path d="M1051.5 148 V155" stroke="#5a5a5a" stroke-width="1"/><path d="M1074.5 148 V155" stroke="#5a5a5a" stroke-width="1"/><path d="M1097.5 148 V155" stroke="#5a5a5a" stroke-width="1"/><path d="M1120.5 148 V155" stroke="#5a5a5a" stroke-width="1"/><text x="97.7" y="141" text-anchor="middle" font-family="Liberation Sans" font-size="9" fill="#111">-80</text><text x="120.5" y="141" text-anchor="middle" font-family="Liberation Sans" font-size="9" fill="#111">-70</text><text x="143.2" y="141" text-anchor="middle" font-family="Liberation Sans" font-size="9" fill="#111">-60</text><text x="165.9" y="141" text-anchor="middle" font-family="Liberation Sans" font-size="9" fill="#111">-50</text><text x="188.6" y="141" text-anchor="middle" font-family="Liberation Sans" font-size="9" fill="#111">-40</text><text x="211.3" y="141" text-anchor="middle" font-family="Liberation Sans" font-size="9" fill="#111">-30</text><text x="234.1" y="141" text-anchor="middle" font-family="Liberation Sans" font-size="9" fill="#111">-20</text><text x="256.8" y="141" text-anchor="middle" font-family="Liberation Sans" font-size="9" fill="#111">-10</text><text x="279.5" y="141" text-anchor="middle" font-family="Liberation Sans" font-size="9" fill="#111">0</text><text x="302.2" y="141" text-anchor="middle" font-family="Liberation Sans" font-size="9" fill="#111">10</text><text x="324.9" y="141" text-anchor="middle" font-family="Liberation Sans" font-size="9" fill="#111">20</text><text x="347.7" y="141" text-anchor="middle" font-family="Liberation Sans" font-size="9" fill="#111">30</text><text x="370.4" y="141" text-anchor="middle" font-family="Liberation Sans" font-size="9" fill="#111">40</text><text x="393.1" y="141" text-anchor="middle" font-family="Liberation Sans" font-size="9" fill="#111">50</text><text x="415.8" y="141" text-anchor="middle" font-family="Liberation Sans" font-size="9" fill="#111">60</text><text x="438.5" y="141" text-anchor="middle" font-family="Liberation Sans" font-size="9" fill="#111">70</text><text x="461.3" y="141" text-anchor="middle" font-family="Liberation Sans" font-size="9" fill="#111">80</text><text x="484.0" y="141" text-anchor="middle" font-family="Liberation Sans" font-size="9" fill="#111">90</text><text x="506.7" y="141" text-anchor="middle" font-family="Liberation Sans" font-size="9" fill="#111">100</text><text x="529.4" y="141" text-anchor="middle" font-family="Liberation Sans" font-size="9" fill="#111">110</text><text x="552.1" y="141" text-anchor="middle" font-family="Liberation Sans" font-size="9" fill="#111">120</text><text x="574.9" y="141" text-anchor="middle" font-family="Liberation Sans" font-size="9" fill="#111">130</text><text x="597.6" y="141" text-anchor="middle" font-family="Liberation Sans" font-size="9" fill="#111">140</text><text x="620.3" y="141" text-anchor="middle" font-family="Liberation Sans" font-size="9" fill="#111">150</text><text x="643.0" y="141" text-anchor="middle" font-family="Liberation Sans" font-size="9" fill="#111">160</text><text x="665.7" y="141" text-anchor="middle" font-family="Liberation Sans" font-size="9" fill="#111">170</text><text x="688.5" y="141" text-anchor="middle" font-family="Liberation Sans" font-size="9" fill="#111">180</text><text x="711.2" y="141" text-anchor="middle" font-family="Liberation Sans" font-size="9" fill="#111">190</text><text x="733.9" y="141" text-anchor="middle" font-family="Liberation Sans" font-size="9" fill="#111">200</text><text x="756.6" y="141" text-anchor="middle" font-family="Liberation Sans" font-size="9" fill="#111">210</text><text x="779.3" y="141" text-anchor="middle" font-family="Liberation Sans" font-size="9" fill="#111">220</text><text x="802.1" y="141" text-anchor="middle" font-family="Liberation Sans" font-size="9" fill="#111">230</text><text x="824.8" y="141" text-anchor="middle" font-family="Liberation Sans" font-size="9" fill="#111">240</text><text x="847.5" y="141" text-anchor="middle" font-family="Liberation Sans" font-size="9" fill="#111">250</text><text x="870.2" y="141" text-anchor="middle" font-family="Liberation Sans" font-size="9" fill="#111">260</text><text x="892.9" y="141" text-anchor="middle" font-family="Liberation Sans" font-size="9" fill="#111">270</text><text x="915.7" y="141" text-anchor="middle" font-family="Liberation Sans" font-size="9" fill="#111">280</text><text x="938.4" y="141" text-anchor="middle" font-family="Liberation Sans" font-size="9" fill="#111">290</text><text x="961.1" y="141" text-anchor="middle" font-family="Liberation Sans" font-size="9" fill="#111">300</text><text x="983.8" y="141" text-anchor="middle" font-family="Liberation Sans" font-size="9" fill="#111">310</text><text x="1006.5" y="141" text-anchor="middle" font-family="Liberation Sans" font-size="9" fill="#111">320</text><text x="1029.3" y="141" text-anchor="middle" font-family="Liberation Sans" font-size="9" fill="#111">330</text><text x="1052.0" y="141" text-anchor="middle" font-family="Liberation Sans" font-size="9" fill="#111">340</text><text x="1074.7" y="141" text-anchor="middle" font-family="Liberation Sans" font-size="9" fill="#111">350</text><text x="1097.4" y="141" text-anchor="middle" font-family="Liberation Sans" font-size="9" fill="#111">360</text><text x="1120.1" y="141" text-anchor="middle" font-family="Liberation Sans" font-size="9" fill="#111">370</text><text x="1142.9" y="141" text-anchor="middle" font-family="Liberation Sans" font-size="9" fill="#111">380</text></svg></div>
<svg style="position:absolute;left:1091px;top:144.5px;" width="13" height="9" viewBox="0 0 13 9"><path d="M0.5 0.5 H12 L6.25 8.5 Z" fill="#000"/></svg>
<div style="position:absolute;left:72px;top:155px;width:23px;height:591px;overflow:hidden"><svg style="left:-72px;top:-155px" width="200" height="900"><path d="M88 727.5 H95" stroke="#5a5a5a" stroke-width="1"/><path d="M88 705.5 H95" stroke="#5a5a5a" stroke-width="1"/><path d="M88 682.5 H95" stroke="#5a5a5a" stroke-width="1"/><path d="M88 659.5 H95" stroke="#5a5a5a" stroke-width="1"/><path d="M88 636.5 H95" stroke="#5a5a5a" stroke-width="1"/><path d="M88 614.5 H95" stroke="#5a5a5a" stroke-width="1"/><path d="M88 591.5 H95" stroke="#5a5a5a" stroke-width="1"/><path d="M88 568.5 H95" stroke="#5a5a5a" stroke-width="1"/><path d="M88 545.5 H95" stroke="#5a5a5a" stroke-width="1"/><path d="M88 523.5 H95" stroke="#5a5a5a" stroke-width="1"/><path d="M88 500.5 H95" stroke="#5a5a5a" stroke-width="1"/><path d="M88 477.5 H95" stroke="#5a5a5a" stroke-width="1"/><path d="M88 454.5 H95" stroke="#5a5a5a" stroke-width="1"/><path d="M88 431.5 H95" stroke="#5a5a5a" stroke-width="1"/><path d="M88 409.5 H95" stroke="#5a5a5a" stroke-width="1"/><path d="M88 386.5 H95" stroke="#5a5a5a" stroke-width="1"/><path d="M88 363.5 H95" stroke="#5a5a5a" stroke-width="1"/><path d="M88 340.5 H95" stroke="#5a5a5a" stroke-width="1"/><path d="M88 318.5 H95" stroke="#5a5a5a" stroke-width="1"/><path d="M88 295.5 H95" stroke="#5a5a5a" stroke-width="1"/><path d="M88 272.5 H95" stroke="#5a5a5a" stroke-width="1"/><path d="M88 249.5 H95" stroke="#5a5a5a" stroke-width="1"/><path d="M88 227.5 H95" stroke="#5a5a5a" stroke-width="1"/><path d="M88 204.5 H95" stroke="#5a5a5a" stroke-width="1"/><path d="M88 181.5 H95" stroke="#5a5a5a" stroke-width="1"/><path d="M88 158.5 H95" stroke="#5a5a5a" stroke-width="1"/><text transform="translate(81.2 728.8) rotate(-90)" text-anchor="middle" font-family="Liberation Sans" font-size="9" fill="#111">-20</text><text transform="translate(81.2 706.1) rotate(-90)" text-anchor="middle" font-family="Liberation Sans" font-size="9" fill="#111">-10</text><text transform="translate(81.2 683.3) rotate(-90)" text-anchor="middle" font-family="Liberation Sans" font-size="9" fill="#111">0</text><text transform="translate(81.2 660.5) rotate(-90)" text-anchor="middle" font-family="Liberation Sans" font-size="9" fill="#111">10</text><text transform="translate(81.2 637.8) rotate(-90)" text-anchor="middle" font-family="Liberation Sans" font-size="9" fill="#111">20</text><text transform="translate(81.2 615.0) rotate(-90)" text-anchor="middle" font-family="Liberation Sans" font-size="9" fill="#111">30</text><text transform="translate(81.2 592.3) rotate(-90)" text-anchor="middle" font-family="Liberation Sans" font-size="9" fill="#111">40</text><text transform="translate(81.2 569.5) rotate(-90)" text-anchor="middle" font-family="Liberation Sans" font-size="9" fill="#111">50</text><text transform="translate(81.2 546.8) rotate(-90)" text-anchor="middle" font-family="Liberation Sans" font-size="9" fill="#111">60</text><text transform="translate(81.2 524.0) rotate(-90)" text-anchor="middle" font-family="Liberation Sans" font-size="9" fill="#111">70</text><text transform="translate(81.2 501.3) rotate(-90)" text-anchor="middle" font-family="Liberation Sans" font-size="9" fill="#111">80</text><text transform="translate(81.2 478.5) rotate(-90)" text-anchor="middle" font-family="Liberation Sans" font-size="9" fill="#111">90</text><text transform="translate(81.2 455.7) rotate(-90)" text-anchor="middle" font-family="Liberation Sans" font-size="9" fill="#111">100</text><text transform="translate(81.2 433.0) rotate(-90)" text-anchor="middle" font-family="Liberation Sans" font-size="9" fill="#111">110</text><text transform="translate(81.2 410.2) rotate(-90)" text-anchor="middle" font-family="Liberation Sans" font-size="9" fill="#111">120</text><text transform="translate(81.2 387.5) rotate(-90)" text-anchor="middle" font-family="Liberation Sans" font-size="9" fill="#111">130</text><text transform="translate(81.2 364.7) rotate(-90)" text-anchor="middle" font-family="Liberation Sans" font-size="9" fill="#111">140</text><text transform="translate(81.2 342.0) rotate(-90)" text-anchor="middle" font-family="Liberation Sans" font-size="9" fill="#111">150</text><text transform="translate(81.2 319.2) rotate(-90)" text-anchor="middle" font-family="Liberation Sans" font-size="9" fill="#111">160</text><text transform="translate(81.2 296.4) rotate(-90)" text-anchor="middle" font-family="Liberation Sans" font-size="9" fill="#111">170</text><text transform="translate(81.2 273.7) rotate(-90)" text-anchor="middle" font-family="Liberation Sans" font-size="9" fill="#111">180</text><text transform="translate(81.2 250.9) rotate(-90)" text-anchor="middle" font-family="Liberation Sans" font-size="9" fill="#111">190</text><text transform="translate(81.2 228.2) rotate(-90)" text-anchor="middle" font-family="Liberation Sans" font-size="9" fill="#111">200</text><text transform="translate(81.2 205.4) rotate(-90)" text-anchor="middle" font-family="Liberation Sans" font-size="9" fill="#111">210</text><text transform="translate(81.2 182.7) rotate(-90)" text-anchor="middle" font-family="Liberation Sans" font-size="9" fill="#111">220</text><text transform="translate(81.2 159.9) rotate(-90)" text-anchor="middle" font-family="Liberation Sans" font-size="9" fill="#111">230</text></svg></div>
<svg style="position:absolute;left:85px;top:244px;" width="8" height="13" viewBox="0 0 8 13"><path d="M0.5 0.5 V12 L7 6.25 Z" fill="#000"/></svg>
<div style="position:absolute;left:95px;top:155px;width:1045px;height:577px;overflow:hidden"><svg style="left:-95px;top:-155px" width="1500" height="844"><rect x="95" y="155" width="1045" height="577" fill="#d3d3d3"/><path d="M507.5 155 V732" stroke="#cfcfcf" stroke-width="1"/><path d="M734.5 155 V732" stroke="#cfcfcf" stroke-width="1"/><path d="M95 454.5 H1140" stroke="#cfcfcf" stroke-width="1"/><path d="M95 227.5 H1140" stroke="#cfcfcf" stroke-width="1"/><path d="M98 728h1v1h-1z M98 705h1v1h-1z M98 682h1v1h-1z M98 659h1v1h-1z M98 637h1v1h-1z M98 614h1v1h-1z M98 591h1v1h-1z M98 568h1v1h-1z M98 546h1v1h-1z M98 523h1v1h-1z M98 500h1v1h-1z M98 477h1v1h-1z M98 455h1v1h-1z M98 432h1v1h-1z M98 409h1v1h-1z M98 386h1v1h-1z M98 364h1v1h-1z M98 341h1v1h-1z M98 318h1v1h-1z M98 295h1v1h-1z M98 272h1v1h-1z M98 250h1v1h-1z M98 227h1v1h-1z M98 204h1v1h-1z M98 181h1v1h-1z M98 159h1v1h-1z M120 728h1v1h-1z M120 705h1v1h-1z M120 682h1v1h-1z M120 659h1v1h-1z M120 637h1v1h-1z M120 614h1v1h-1z M120 591h1v1h-1z M120 568h1v1h-1z M120 546h1v1h-1z M120 523h1v1h-1z M120 500h1v1h-1z M120 477h1v1h-1z M120 455h1v1h-1z M120 432h1v1h-1z M120 409h1v1h-1z M120 386h1v1h-1z M120 364h1v1h-1z M120 341h1v1h-1z M120 318h1v1h-1z M120 295h1v1h-1z M120 272h1v1h-1z M120 250h1v1h-1z M120 227h1v1h-1z M120 204h1v1h-1z M120 181h1v1h-1z M120 159h1v1h-1z M143 728h1v1h-1z M143 705h1v1h-1z M143 682h1v1h-1z M143 659h1v1h-1z M143 637h1v1h-1z M143 614h1v1h-1z M143 591h1v1h-1z M143 568h1v1h-1z M143 546h1v1h-1z M143 523h1v1h-1z M143 500h1v1h-1z M143 477h1v1h-1z M143 455h1v1h-1z M143 432h1v1h-1z M143 409h1v1h-1z M143 386h1v1h-1z M143 364h1v1h-1z M143 341h1v1h-1z M143 318h1v1h-1z M143 295h1v1h-1z M143 272h1v1h-1z M143 250h1v1h-1z M143 227h1v1h-1z M143 204h1v1h-1z M143 181h1v1h-1z M143 159h1v1h-1z M166 728h1v1h-1z M166 705h1v1h-1z M166 682h1v1h-1z M166 659h1v1h-1z M166 637h1v1h-1z M166 614h1v1h-1z M166 591h1v1h-1z M166 568h1v1h-1z M166 546h1v1h-1z M166 523h1v1h-1z M166 500h1v1h-1z M166 477h1v1h-1z M166 455h1v1h-1z M166 432h1v1h-1z M166 409h1v1h-1z M166 386h1v1h-1z M166 364h1v1h-1z M166 341h1v1h-1z M166 318h1v1h-1z M166 295h1v1h-1z M166 272h1v1h-1z M166 250h1v1h-1z M166 227h1v1h-1z M166 204h1v1h-1z M166 181h1v1h-1z M166 159h1v1h-1z M189 728h1v1h-1z M189 705h1v1h-1z M189 682h1v1h-1z M189 659h1v1h-1z M189 637h1v1h-1z M189 614h1v1h-1z M189 591h1v1h-1z M189 568h1v1h-1z M189 546h1v1h-1z M189 523h1v1h-1z M189 500h1v1h-1z M189 477h1v1h-1z M189 455h1v1h-1z M189 432h1v1h-1z M189 409h1v1h-1z M189 386h1v1h-1z M189 364h1v1h-1z M189 341h1v1h-1z M189 318h1v1h-1z M189 295h1v1h-1z M189 272h1v1h-1z M189 250h1v1h-1z M189 227h1v1h-1z M189 204h1v1h-1z M189 181h1v1h-1z M189 159h1v1h-1z M211 728h1v1h-1z M211 705h1v1h-1z M211 682h1v1h-1z M211 659h1v1h-1z M211 637h1v1h-1z M211 614h1v1h-1z M211 591h1v1h-1z M211 568h1v1h-1z M211 546h1v1h-1z M211 523h1v1h-1z M211 500h1v1h-1z M211 477h1v1h-1z M211 455h1v1h-1z M211 432h1v1h-1z M211 409h1v1h-1z M211 386h1v1h-1z M211 364h1v1h-1z M211 341h1v1h-1z M211 318h1v1h-1z M211 295h1v1h-1z M211 272h1v1h-1z M211 250h1v1h-1z M211 227h1v1h-1z M211 204h1v1h-1z M211 181h1v1h-1z M211 159h1v1h-1z M234 728h1v1h-1z M234 705h1v1h-1z M234 682h1v1h-1z M234 659h1v1h-1z M234 637h1v1h-1z M234 614h1v1h-1z M234 591h1v1h-1z M234 568h1v1h-1z M234 546h1v1h-1z M234 523h1v1h-1z M234 500h1v1h-1z M234 477h1v1h-1z M234 455h1v1h-1z M234 432h1v1h-1z M234 409h1v1h-1z M234 386h1v1h-1z M234 364h1v1h-1z M234 341h1v1h-1z M234 318h1v1h-1z M234 295h1v1h-1z M234 272h1v1h-1z M234 250h1v1h-1z M234 227h1v1h-1z M234 204h1v1h-1z M234 181h1v1h-1z M234 159h1v1h-1z M257 728h1v1h-1z M257 705h1v1h-1z M257 682h1v1h-1z M257 659h1v1h-1z M257 637h1v1h-1z M257 614h1v1h-1z M257 591h1v1h-1z M257 568h1v1h-1z M257 546h1v1h-1z M257 523h1v1h-1z M257 500h1v1h-1z M257 477h1v1h-1z M257 455h1v1h-1z M257 432h1v1h-1z M257 409h1v1h-1z M257 386h1v1h-1z M257 364h1v1h-1z M257 341h1v1h-1z M257 318h1v1h-1z M257 295h1v1h-1z M257 272h1v1h-1z M257 250h1v1h-1z M257 227h1v1h-1z M257 204h1v1h-1z M257 181h1v1h-1z M257 159h1v1h-1z M280 728h1v1h-1z M280 705h1v1h-1z M280 682h1v1h-1z M280 659h1v1h-1z M280 637h1v1h-1z M280 614h1v1h-1z M280 591h1v1h-1z M280 568h1v1h-1z M280 546h1v1h-1z M280 523h1v1h-1z M280 500h1v1h-1z M280 477h1v1h-1z M280 455h1v1h-1z M280 432h1v1h-1z M280 409h1v1h-1z M280 386h1v1h-1z M280 364h1v1h-1z M280 341h1v1h-1z M280 318h1v1h-1z M280 295h1v1h-1z M280 272h1v1h-1z M280 250h1v1h-1z M280 227h1v1h-1z M280 204h1v1h-1z M280 181h1v1h-1z M280 159h1v1h-1z M302 728h1v1h-1z M302 705h1v1h-1z M302 682h1v1h-1z M302 659h1v1h-1z M302 637h1v1h-1z M302 614h1v1h-1z M302 591h1v1h-1z M302 568h1v1h-1z M302 546h1v1h-1z M302 523h1v1h-1z M302 500h1v1h-1z M302 477h1v1h-1z M302 455h1v1h-1z M302 432h1v1h-1z M302 409h1v1h-1z M302 386h1v1h-1z M302 364h1v1h-1z M302 341h1v1h-1z M302 318h1v1h-1z M302 295h1v1h-1z M302 272h1v1h-1z M302 250h1v1h-1z M302 227h1v1h-1z M302 204h1v1h-1z M302 181h1v1h-1z M302 159h1v1h-1z M325 728h1v1h-1z M325 705h1v1h-1z M325 682h1v1h-1z M325 659h1v1h-1z M325 637h1v1h-1z M325 614h1v1h-1z M325 591h1v1h-1z M325 568h1v1h-1z M325 546h1v1h-1z M325 523h1v1h-1z M325 500h1v1h-1z M325 477h1v1h-1z M325 455h1v1h-1z M325 432h1v1h-1z M325 409h1v1h-1z M325 386h1v1h-1z M325 364h1v1h-1z M325 341h1v1h-1z M325 318h1v1h-1z M325 295h1v1h-1z M325 272h1v1h-1z M325 250h1v1h-1z M325 227h1v1h-1z M325 204h1v1h-1z M325 181h1v1h-1z M325 159h1v1h-1z M348 728h1v1h-1z M348 705h1v1h-1z M348 682h1v1h-1z M348 659h1v1h-1z M348 637h1v1h-1z M348 614h1v1h-1z M348 591h1v1h-1z M348 568h1v1h-1z M348 546h1v1h-1z M348 523h1v1h-1z M348 500h1v1h-1z M348 477h1v1h-1z M348 455h1v1h-1z M348 432h1v1h-1z M348 409h1v1h-1z M348 386h1v1h-1z M348 364h1v1h-1z M348 341h1v1h-1z M348 318h1v1h-1z M348 295h1v1h-1z M348 272h1v1h-1z M348 250h1v1h-1z M348 227h1v1h-1z M348 204h1v1h-1z M348 181h1v1h-1z M348 159h1v1h-1z M370 728h1v1h-1z M370 705h1v1h-1z M370 682h1v1h-1z M370 659h1v1h-1z M370 637h1v1h-1z M370 614h1v1h-1z M370 591h1v1h-1z M370 568h1v1h-1z M370 546h1v1h-1z M370 523h1v1h-1z M370 500h1v1h-1z M370 477h1v1h-1z M370 455h1v1h-1z M370 432h1v1h-1z M370 409h1v1h-1z M370 386h1v1h-1z M370 364h1v1h-1z M370 341h1v1h-1z M370 318h1v1h-1z M370 295h1v1h-1z M370 272h1v1h-1z M370 250h1v1h-1z M370 227h1v1h-1z M370 204h1v1h-1z M370 181h1v1h-1z M370 159h1v1h-1z M393 728h1v1h-1z M393 705h1v1h-1z M393 682h1v1h-1z M393 659h1v1h-1z M393 637h1v1h-1z M393 614h1v1h-1z M393 591h1v1h-1z M393 568h1v1h-1z M393 546h1v1h-1z M393 523h1v1h-1z M393 500h1v1h-1z M393 477h1v1h-1z M393 455h1v1h-1z M393 432h1v1h-1z M393 409h1v1h-1z M393 386h1v1h-1z M393 364h1v1h-1z M393 341h1v1h-1z M393 318h1v1h-1z M393 295h1v1h-1z M393 272h1v1h-1z M393 250h1v1h-1z M393 227h1v1h-1z M393 204h1v1h-1z M393 181h1v1h-1z M393 159h1v1h-1z M416 728h1v1h-1z M416 705h1v1h-1z M416 682h1v1h-1z M416 659h1v1h-1z M416 637h1v1h-1z M416 614h1v1h-1z M416 591h1v1h-1z M416 568h1v1h-1z M416 546h1v1h-1z M416 523h1v1h-1z M416 500h1v1h-1z M416 477h1v1h-1z M416 455h1v1h-1z M416 432h1v1h-1z M416 409h1v1h-1z M416 386h1v1h-1z M416 364h1v1h-1z M416 341h1v1h-1z M416 318h1v1h-1z M416 295h1v1h-1z M416 272h1v1h-1z M416 250h1v1h-1z M416 227h1v1h-1z M416 204h1v1h-1z M416 181h1v1h-1z M416 159h1v1h-1z M439 728h1v1h-1z M439 705h1v1h-1z M439 682h1v1h-1z M439 659h1v1h-1z M439 637h1v1h-1z M439 614h1v1h-1z M439 591h1v1h-1z M439 568h1v1h-1z M439 546h1v1h-1z M439 523h1v1h-1z M439 500h1v1h-1z M439 477h1v1h-1z M439 455h1v1h-1z M439 432h1v1h-1z M439 409h1v1h-1z M439 386h1v1h-1z M439 364h1v1h-1z M439 341h1v1h-1z M439 318h1v1h-1z M439 295h1v1h-1z M439 272h1v1h-1z M439 250h1v1h-1z M439 227h1v1h-1z M439 204h1v1h-1z M439 181h1v1h-1z M439 159h1v1h-1z M461 728h1v1h-1z M461 705h1v1h-1z M461 682h1v1h-1z M461 659h1v1h-1z M461 637h1v1h-1z M461 614h1v1h-1z M461 591h1v1h-1z M461 568h1v1h-1z M461 546h1v1h-1z M461 523h1v1h-1z M461 500h1v1h-1z M461 477h1v1h-1z M461 455h1v1h-1z M461 432h1v1h-1z M461 409h1v1h-1z M461 386h1v1h-1z M461 364h1v1h-1z M461 341h1v1h-1z M461 318h1v1h-1z M461 295h1v1h-1z M461 272h1v1h-1z M461 250h1v1h-1z M461 227h1v1h-1z M461 204h1v1h-1z M461 181h1v1h-1z M461 159h1v1h-1z M484 728h1v1h-1z M484 705h1v1h-1z M484 682h1v1h-1z M484 659h1v1h-1z M484 637h1v1h-1z M484 614h1v1h-1z M484 591h1v1h-1z M484 568h1v1h-1z M484 546h1v1h-1z M484 523h1v1h-1z M484 500h1v1h-1z M484 477h1v1h-1z M484 455h1v1h-1z M484 432h1v1h-1z M484 409h1v1h-1z M484 386h1v1h-1z M484 364h1v1h-1z M484 341h1v1h-1z M484 318h1v1h-1z M484 295h1v1h-1z M484 272h1v1h-1z M484 250h1v1h-1z M484 227h1v1h-1z M484 204h1v1h-1z M484 181h1v1h-1z M484 159h1v1h-1z M507 728h1v1h-1z M507 705h1v1h-1z M507 682h1v1h-1z M507 659h1v1h-1z M507 637h1v1h-1z M507 614h1v1h-1z M507 591h1v1h-1z M507 568h1v1h-1z M507 546h1v1h-1z M507 523h1v1h-1z M507 500h1v1h-1z M507 477h1v1h-1z M507 455h1v1h-1z M507 432h1v1h-1z M507 409h1v1h-1z M507 386h1v1h-1z M507 364h1v1h-1z M507 341h1v1h-1z M507 318h1v1h-1z M507 295h1v1h-1z M507 272h1v1h-1z M507 250h1v1h-1z M507 227h1v1h-1z M507 204h1v1h-1z M507 181h1v1h-1z M507 159h1v1h-1z M529 728h1v1h-1z M529 705h1v1h-1z M529 682h1v1h-1z M529 659h1v1h-1z M529 637h1v1h-1z M529 614h1v1h-1z M529 591h1v1h-1z M529 568h1v1h-1z M529 546h1v1h-1z M529 523h1v1h-1z M529 500h1v1h-1z M529 477h1v1h-1z M529 455h1v1h-1z M529 432h1v1h-1z M529 409h1v1h-1z M529 386h1v1h-1z M529 364h1v1h-1z M529 341h1v1h-1z M529 318h1v1h-1z M529 295h1v1h-1z M529 272h1v1h-1z M529 250h1v1h-1z M529 227h1v1h-1z M529 204h1v1h-1z M529 181h1v1h-1z M529 159h1v1h-1z M552 728h1v1h-1z M552 705h1v1h-1z M552 682h1v1h-1z M552 659h1v1h-1z M552 637h1v1h-1z M552 614h1v1h-1z M552 591h1v1h-1z M552 568h1v1h-1z M552 546h1v1h-1z M552 523h1v1h-1z M552 500h1v1h-1z M552 477h1v1h-1z M552 455h1v1h-1z M552 432h1v1h-1z M552 409h1v1h-1z M552 386h1v1h-1z M552 364h1v1h-1z M552 341h1v1h-1z M552 318h1v1h-1z M552 295h1v1h-1z M552 272h1v1h-1z M552 250h1v1h-1z M552 227h1v1h-1z M552 204h1v1h-1z M552 181h1v1h-1z M552 159h1v1h-1z M575 728h1v1h-1z M575 705h1v1h-1z M575 682h1v1h-1z M575 659h1v1h-1z M575 637h1v1h-1z M575 614h1v1h-1z M575 591h1v1h-1z M575 568h1v1h-1z M575 546h1v1h-1z M575 523h1v1h-1z M575 500h1v1h-1z M575 477h1v1h-1z M575 455h1v1h-1z M575 432h1v1h-1z M575 409h1v1h-1z M575 386h1v1h-1z M575 364h1v1h-1z M575 341h1v1h-1z M575 318h1v1h-1z M575 295h1v1h-1z M575 272h1v1h-1z M575 250h1v1h-1z M575 227h1v1h-1z M575 204h1v1h-1z M575 181h1v1h-1z M575 159h1v1h-1z M598 728h1v1h-1z M598 705h1v1h-1z M598 682h1v1h-1z M598 659h1v1h-1z M598 637h1v1h-1z M598 614h1v1h-1z M598 591h1v1h-1z M598 568h1v1h-1z M598 546h1v1h-1z M598 523h1v1h-1z M598 500h1v1h-1z M598 477h1v1h-1z M598 455h1v1h-1z M598 432h1v1h-1z M598 409h1v1h-1z M598 386h1v1h-1z M598 364h1v1h-1z M598 341h1v1h-1z M598 318h1v1h-1z M598 295h1v1h-1z M598 272h1v1h-1z M598 250h1v1h-1z M598 227h1v1h-1z M598 204h1v1h-1z M598 181h1v1h-1z M598 159h1v1h-1z M620 728h1v1h-1z M620 705h1v1h-1z M620 682h1v1h-1z M620 659h1v1h-1z M620 637h1v1h-1z M620 614h1v1h-1z M620 591h1v1h-1z M620 568h1v1h-1z M620 546h1v1h-1z M620 523h1v1h-1z M620 500h1v1h-1z M620 477h1v1h-1z M620 455h1v1h-1z M620 432h1v1h-1z M620 409h1v1h-1z M620 386h1v1h-1z M620 364h1v1h-1z M620 341h1v1h-1z M620 318h1v1h-1z M620 295h1v1h-1z M620 272h1v1h-1z M620 250h1v1h-1z M620 227h1v1h-1z M620 204h1v1h-1z M620 181h1v1h-1z M620 159h1v1h-1z M643 728h1v1h-1z M643 705h1v1h-1z M643 682h1v1h-1z M643 659h1v1h-1z M643 637h1v1h-1z M643 614h1v1h-1z M643 591h1v1h-1z M643 568h1v1h-1z M643 546h1v1h-1z M643 523h1v1h-1z M643 500h1v1h-1z M643 477h1v1h-1z M643 455h1v1h-1z M643 432h1v1h-1z M643 409h1v1h-1z M643 386h1v1h-1z M643 364h1v1h-1z M643 341h1v1h-1z M643 318h1v1h-1z M643 295h1v1h-1z M643 272h1v1h-1z M643 250h1v1h-1z M643 227h1v1h-1z M643 204h1v1h-1z M643 181h1v1h-1z M643 159h1v1h-1z M666 728h1v1h-1z M666 705h1v1h-1z M666 682h1v1h-1z M666 659h1v1h-1z M666 637h1v1h-1z M666 614h1v1h-1z M666 591h1v1h-1z M666 568h1v1h-1z M666 546h1v1h-1z M666 523h1v1h-1z M666 500h1v1h-1z M666 477h1v1h-1z M666 455h1v1h-1z M666 432h1v1h-1z M666 409h1v1h-1z M666 386h1v1h-1z M666 364h1v1h-1z M666 341h1v1h-1z M666 318h1v1h-1z M666 295h1v1h-1z M666 272h1v1h-1z M666 250h1v1h-1z M666 227h1v1h-1z M666 204h1v1h-1z M666 181h1v1h-1z M666 159h1v1h-1z M688 728h1v1h-1z M688 705h1v1h-1z M688 682h1v1h-1z M688 659h1v1h-1z M688 637h1v1h-1z M688 614h1v1h-1z M688 591h1v1h-1z M688 568h1v1h-1z M688 546h1v1h-1z M688 523h1v1h-1z M688 500h1v1h-1z M688 477h1v1h-1z M688 455h1v1h-1z M688 432h1v1h-1z M688 409h1v1h-1z M688 386h1v1h-1z M688 364h1v1h-1z M688 341h1v1h-1z M688 318h1v1h-1z M688 295h1v1h-1z M688 272h1v1h-1z M688 250h1v1h-1z M688 227h1v1h-1z M688 204h1v1h-1z M688 181h1v1h-1z M688 159h1v1h-1z M711 728h1v1h-1z M711 705h1v1h-1z M711 682h1v1h-1z M711 659h1v1h-1z M711 637h1v1h-1z M711 614h1v1h-1z M711 591h1v1h-1z M711 568h1v1h-1z M711 546h1v1h-1z M711 523h1v1h-1z M711 500h1v1h-1z M711 477h1v1h-1z M711 455h1v1h-1z M711 432h1v1h-1z M711 409h1v1h-1z M711 386h1v1h-1z M711 364h1v1h-1z M711 341h1v1h-1z M711 318h1v1h-1z M711 295h1v1h-1z M711 272h1v1h-1z M711 250h1v1h-1z M711 227h1v1h-1z M711 204h1v1h-1z M711 181h1v1h-1z M711 159h1v1h-1z M734 728h1v1h-1z M734 705h1v1h-1z M734 682h1v1h-1z M734 659h1v1h-1z M734 637h1v1h-1z M734 614h1v1h-1z M734 591h1v1h-1z M734 568h1v1h-1z M734 546h1v1h-1z M734 523h1v1h-1z M734 500h1v1h-1z M734 477h1v1h-1z M734 455h1v1h-1z M734 432h1v1h-1z M734 409h1v1h-1z M734 386h1v1h-1z M734 364h1v1h-1z M734 341h1v1h-1z M734 318h1v1h-1z M734 295h1v1h-1z M734 272h1v1h-1z M734 250h1v1h-1z M734 227h1v1h-1z M734 204h1v1h-1z M734 181h1v1h-1z M734 159h1v1h-1z M757 728h1v1h-1z M757 705h1v1h-1z M757 682h1v1h-1z M757 659h1v1h-1z M757 637h1v1h-1z M757 614h1v1h-1z M757 591h1v1h-1z M757 568h1v1h-1z M757 546h1v1h-1z M757 523h1v1h-1z M757 500h1v1h-1z M757 477h1v1h-1z M757 455h1v1h-1z M757 432h1v1h-1z M757 409h1v1h-1z M757 386h1v1h-1z M757 364h1v1h-1z M757 341h1v1h-1z M757 318h1v1h-1z M757 295h1v1h-1z M757 272h1v1h-1z M757 250h1v1h-1z M757 227h1v1h-1z M757 204h1v1h-1z M757 181h1v1h-1z M757 159h1v1h-1z M779 728h1v1h-1z M779 705h1v1h-1z M779 682h1v1h-1z M779 659h1v1h-1z M779 637h1v1h-1z M779 614h1v1h-1z M779 591h1v1h-1z M779 568h1v1h-1z M779 546h1v1h-1z M779 523h1v1h-1z M779 500h1v1h-1z M779 477h1v1h-1z M779 455h1v1h-1z M779 432h1v1h-1z M779 409h1v1h-1z M779 386h1v1h-1z M779 364h1v1h-1z M779 341h1v1h-1z M779 318h1v1h-1z M779 295h1v1h-1z M779 272h1v1h-1z M779 250h1v1h-1z M779 227h1v1h-1z M779 204h1v1h-1z M779 181h1v1h-1z M779 159h1v1h-1z M802 728h1v1h-1z M802 705h1v1h-1z M802 682h1v1h-1z M802 659h1v1h-1z M802 637h1v1h-1z M802 614h1v1h-1z M802 591h1v1h-1z M802 568h1v1h-1z M802 546h1v1h-1z M802 523h1v1h-1z M802 500h1v1h-1z M802 477h1v1h-1z M802 455h1v1h-1z M802 432h1v1h-1z M802 409h1v1h-1z M802 386h1v1h-1z M802 364h1v1h-1z M802 341h1v1h-1z M802 318h1v1h-1z M802 295h1v1h-1z M802 272h1v1h-1z M802 250h1v1h-1z M802 227h1v1h-1z M802 204h1v1h-1z M802 181h1v1h-1z M802 159h1v1h-1z M825 728h1v1h-1z M825 705h1v1h-1z M825 682h1v1h-1z M825 659h1v1h-1z M825 637h1v1h-1z M825 614h1v1h-1z M825 591h1v1h-1z M825 568h1v1h-1z M825 546h1v1h-1z M825 523h1v1h-1z M825 500h1v1h-1z M825 477h1v1h-1z M825 455h1v1h-1z M825 432h1v1h-1z M825 409h1v1h-1z M825 386h1v1h-1z M825 364h1v1h-1z M825 341h1v1h-1z M825 318h1v1h-1z M825 295h1v1h-1z M825 272h1v1h-1z M825 250h1v1h-1z M825 227h1v1h-1z M825 204h1v1h-1z M825 181h1v1h-1z M825 159h1v1h-1z M848 728h1v1h-1z M848 705h1v1h-1z M848 682h1v1h-1z M848 659h1v1h-1z M848 637h1v1h-1z M848 614h1v1h-1z M848 591h1v1h-1z M848 568h1v1h-1z M848 546h1v1h-1z M848 523h1v1h-1z M848 500h1v1h-1z M848 477h1v1h-1z M848 455h1v1h-1z M848 432h1v1h-1z M848 409h1v1h-1z M848 386h1v1h-1z M848 364h1v1h-1z M848 341h1v1h-1z M848 318h1v1h-1z M848 295h1v1h-1z M848 272h1v1h-1z M848 250h1v1h-1z M848 227h1v1h-1z M848 204h1v1h-1z M848 181h1v1h-1z M848 159h1v1h-1z M870 728h1v1h-1z M870 705h1v1h-1z M870 682h1v1h-1z M870 659h1v1h-1z M870 637h1v1h-1z M870 614h1v1h-1z M870 591h1v1h-1z M870 568h1v1h-1z M870 546h1v1h-1z M870 523h1v1h-1z M870 500h1v1h-1z M870 477h1v1h-1z M870 455h1v1h-1z M870 432h1v1h-1z M870 409h1v1h-1z M870 386h1v1h-1z M870 364h1v1h-1z M870 341h1v1h-1z M870 318h1v1h-1z M870 295h1v1h-1z M870 272h1v1h-1z M870 250h1v1h-1z M870 227h1v1h-1z M870 204h1v1h-1z M870 181h1v1h-1z M870 159h1v1h-1z M893 728h1v1h-1z M893 705h1v1h-1z M893 682h1v1h-1z M893 659h1v1h-1z M893 637h1v1h-1z M893 614h1v1h-1z M893 591h1v1h-1z M893 568h1v1h-1z M893 546h1v1h-1z M893 523h1v1h-1z M893 500h1v1h-1z M893 477h1v1h-1z M893 455h1v1h-1z M893 432h1v1h-1z M893 409h1v1h-1z M893 386h1v1h-1z M893 364h1v1h-1z M893 341h1v1h-1z M893 318h1v1h-1z M893 295h1v1h-1z M893 272h1v1h-1z M893 250h1v1h-1z M893 227h1v1h-1z M893 204h1v1h-1z M893 181h1v1h-1z M893 159h1v1h-1z M916 728h1v1h-1z M916 705h1v1h-1z M916 682h1v1h-1z M916 659h1v1h-1z M916 637h1v1h-1z M916 614h1v1h-1z M916 591h1v1h-1z M916 568h1v1h-1z M916 546h1v1h-1z M916 523h1v1h-1z M916 500h1v1h-1z M916 477h1v1h-1z M916 455h1v1h-1z M916 432h1v1h-1z M916 409h1v1h-1z M916 386h1v1h-1z M916 364h1v1h-1z M916 341h1v1h-1z M916 318h1v1h-1z M916 295h1v1h-1z M916 272h1v1h-1z M916 250h1v1h-1z M916 227h1v1h-1z M916 204h1v1h-1z M916 181h1v1h-1z M916 159h1v1h-1z M938 728h1v1h-1z M938 705h1v1h-1z M938 682h1v1h-1z M938 659h1v1h-1z M938 637h1v1h-1z M938 614h1v1h-1z M938 591h1v1h-1z M938 568h1v1h-1z M938 546h1v1h-1z M938 523h1v1h-1z M938 500h1v1h-1z M938 477h1v1h-1z M938 455h1v1h-1z M938 432h1v1h-1z M938 409h1v1h-1z M938 386h1v1h-1z M938 364h1v1h-1z M938 341h1v1h-1z M938 318h1v1h-1z M938 295h1v1h-1z M938 272h1v1h-1z M938 250h1v1h-1z M938 227h1v1h-1z M938 204h1v1h-1z M938 181h1v1h-1z M938 159h1v1h-1z M961 728h1v1h-1z M961 705h1v1h-1z M961 682h1v1h-1z M961 659h1v1h-1z M961 637h1v1h-1z M961 614h1v1h-1z M961 591h1v1h-1z M961 568h1v1h-1z M961 546h1v1h-1z M961 523h1v1h-1z M961 500h1v1h-1z M961 477h1v1h-1z M961 455h1v1h-1z M961 432h1v1h-1z M961 409h1v1h-1z M961 386h1v1h-1z M961 364h1v1h-1z M961 341h1v1h-1z M961 318h1v1h-1z M961 295h1v1h-1z M961 272h1v1h-1z M961 250h1v1h-1z M961 227h1v1h-1z M961 204h1v1h-1z M961 181h1v1h-1z M961 159h1v1h-1z M984 728h1v1h-1z M984 705h1v1h-1z M984 682h1v1h-1z M984 659h1v1h-1z M984 637h1v1h-1z M984 614h1v1h-1z M984 591h1v1h-1z M984 568h1v1h-1z M984 546h1v1h-1z M984 523h1v1h-1z M984 500h1v1h-1z M984 477h1v1h-1z M984 455h1v1h-1z M984 432h1v1h-1z M984 409h1v1h-1z M984 386h1v1h-1z M984 364h1v1h-1z M984 341h1v1h-1z M984 318h1v1h-1z M984 295h1v1h-1z M984 272h1v1h-1z M984 250h1v1h-1z M984 227h1v1h-1z M984 204h1v1h-1z M984 181h1v1h-1z M984 159h1v1h-1z M1007 728h1v1h-1z M1007 705h1v1h-1z M1007 682h1v1h-1z M1007 659h1v1h-1z M1007 637h1v1h-1z M1007 614h1v1h-1z M1007 591h1v1h-1z M1007 568h1v1h-1z M1007 546h1v1h-1z M1007 523h1v1h-1z M1007 500h1v1h-1z M1007 477h1v1h-1z M1007 455h1v1h-1z M1007 432h1v1h-1z M1007 409h1v1h-1z M1007 386h1v1h-1z M1007 364h1v1h-1z M1007 341h1v1h-1z M1007 318h1v1h-1z M1007 295h1v1h-1z M1007 272h1v1h-1z M1007 250h1v1h-1z M1007 227h1v1h-1z M1007 204h1v1h-1z M1007 181h1v1h-1z M1007 159h1v1h-1z M1029 728h1v1h-1z M1029 705h1v1h-1z M1029 682h1v1h-1z M1029 659h1v1h-1z M1029 637h1v1h-1z M1029 614h1v1h-1z M1029 591h1v1h-1z M1029 568h1v1h-1z M1029 546h1v1h-1z M1029 523h1v1h-1z M1029 500h1v1h-1z M1029 477h1v1h-1z M1029 455h1v1h-1z M1029 432h1v1h-1z M1029 409h1v1h-1z M1029 386h1v1h-1z M1029 364h1v1h-1z M1029 341h1v1h-1z M1029 318h1v1h-1z M1029 295h1v1h-1z M1029 272h1v1h-1z M1029 250h1v1h-1z M1029 227h1v1h-1z M1029 204h1v1h-1z M1029 181h1v1h-1z M1029 159h1v1h-1z M1052 728h1v1h-1z M1052 705h1v1h-1z M1052 682h1v1h-1z M1052 659h1v1h-1z M1052 637h1v1h-1z M1052 614h1v1h-1z M1052 591h1v1h-1z M1052 568h1v1h-1z M1052 546h1v1h-1z M1052 523h1v1h-1z M1052 500h1v1h-1z M1052 477h1v1h-1z M1052 455h1v1h-1z M1052 432h1v1h-1z M1052 409h1v1h-1z M1052 386h1v1h-1z M1052 364h1v1h-1z M1052 341h1v1h-1z M1052 318h1v1h-1z M1052 295h1v1h-1z M1052 272h1v1h-1z M1052 250h1v1h-1z M1052 227h1v1h-1z M1052 204h1v1h-1z M1052 181h1v1h-1z M1052 159h1v1h-1z M1075 728h1v1h-1z M1075 705h1v1h-1z M1075 682h1v1h-1z M1075 659h1v1h-1z M1075 637h1v1h-1z M1075 614h1v1h-1z M1075 591h1v1h-1z M1075 568h1v1h-1z M1075 546h1v1h-1z M1075 523h1v1h-1z M1075 500h1v1h-1z M1075 477h1v1h-1z M1075 455h1v1h-1z M1075 432h1v1h-1z M1075 409h1v1h-1z M1075 386h1v1h-1z M1075 364h1v1h-1z M1075 341h1v1h-1z M1075 318h1v1h-1z M1075 295h1v1h-1z M1075 272h1v1h-1z M1075 250h1v1h-1z M1075 227h1v1h-1z M1075 204h1v1h-1z M1075 181h1v1h-1z M1075 159h1v1h-1z M1097 728h1v1h-1z M1097 705h1v1h-1z M1097 682h1v1h-1z M1097 659h1v1h-1z M1097 637h1v1h-1z M1097 614h1v1h-1z M1097 591h1v1h-1z M1097 568h1v1h-1z M1097 546h1v1h-1z M1097 523h1v1h-1z M1097 500h1v1h-1z M1097 477h1v1h-1z M1097 455h1v1h-1z M1097 432h1v1h-1z M1097 409h1v1h-1z M1097 386h1v1h-1z M1097 364h1v1h-1z M1097 341h1v1h-1z M1097 318h1v1h-1z M1097 295h1v1h-1z M1097 272h1v1h-1z M1097 250h1v1h-1z M1097 227h1v1h-1z M1097 204h1v1h-1z M1097 181h1v1h-1z M1097 159h1v1h-1z M1120 728h1v1h-1z M1120 705h1v1h-1z M1120 682h1v1h-1z M1120 659h1v1h-1z M1120 637h1v1h-1z M1120 614h1v1h-1z M1120 591h1v1h-1z M1120 568h1v1h-1z M1120 546h1v1h-1z M1120 523h1v1h-1z M1120 500h1v1h-1z M1120 477h1v1h-1z M1120 455h1v1h-1z M1120 432h1v1h-1z M1120 409h1v1h-1z M1120 386h1v1h-1z M1120 364h1v1h-1z M1120 341h1v1h-1z M1120 318h1v1h-1z M1120 295h1v1h-1z M1120 272h1v1h-1z M1120 250h1v1h-1z M1120 227h1v1h-1z M1120 204h1v1h-1z M1120 181h1v1h-1z M1120 159h1v1h-1z" fill="#e2e2e2"/><rect x="955" y="215" width="9" height="476" fill="#858585"/><rect x="289" y="683" width="675" height="8" fill="#858585"/><rect x="280" y="205" width="674" height="477" fill="#c9c9c9"/><rect x="281" y="206" width="672" height="475" fill="#fff"/><path d="M506.5 206 V681" stroke="#f0f0f0" stroke-width="1"/><path d="M733.5 206 V681" stroke="#f0f0f0" stroke-width="1"/><path d="M281 227.5 H953 M281 454.5 H953" stroke="#f0f0f0" stroke-width="1"/><rect x="302.5" y="228" width="629" height="431" fill="none" stroke="#7070f0" stroke-width="3" stroke-opacity="0.45"/><rect x="302.5" y="228" width="629" height="431" fill="none" stroke="#3c3c8c" stroke-width="1.6"/><rect x="303.5" y="221.5" width="316" height="329.5" fill="none" stroke="#f060f0" stroke-width="1" stroke-dasharray="3.8 1.5 0.8 1.5"/><path d="M965.5 155 V375.5 H1140" fill="none" stroke="#f060f0" stroke-width="1" stroke-dasharray="3.8 1.5 0.8 1.5"/><path d="M452.5 256 V530" stroke="#ff7a7a" stroke-width="1" stroke-dasharray="10.5 2.6 1 2.6"/><path d="M437.5 311 V291 A14.6 14.6 0 0 1 466.7 291 V311 M452.4 291 m-3.5 0 a3.5 3.5 0 1 0 7 0 a3.5 3.5 0 1 0 -7 0 M452.4 301.6 L326.2 401 L328.4 403.8 L452.4 305.2 L576.4 403.8 L578.6 401 Z M390.8 346.4 L408.6 332.3 L409.2 333.2 L391.4 347.3 Z M496.2 332.3 L514 346.4 L513.4 347.3 L495.6 333.2 Z M361.2 377.3 L380 487 M542.4 377.3 L524.7 487 M327 487 H578 V501 H327 Z M327 498 H578 M452.5 487 V501 M382 501 V510 Q382 513.5 386 513.5 H517 Q521 513.5 521 510 V501" fill="none" stroke="#2a2a2a" stroke-width="0.75" stroke-linejoin="round"/><path transform="translate(415 358) scale(0.08888888888888889)" d="M61.7 440 A358 358 0 1 1 695.7 644.7 C 620 520, 540 380, 420 290 L 410 280 L 412 220 C 430 210, 455 200, 460 185 L 400 180 C 370 160, 320 150, 280 170 C 250 190, 250 260, 245 300 C 225 340, 215 400, 225 450 C 245 510, 300 555, 360 575 L 365 590 L 345 605 Z M66.5 480 L520 760 A358 358 0 0 1 66.5 480 Z M450 600 C 480 580, 510 575, 620 620 L 670 670 L 575 740 L 450 660 Z M385 590 L 420 600 L 430 640 L 395 630 Z" fill="none" stroke="#2a2a2a" stroke-width="0.75" vector-effect="non-scaling-stroke"/><path d="M453 276.5 H615 M521 513.5 H615 M611.5 277 V513" stroke="#008080" stroke-opacity="0.42" stroke-width="1" fill="none"/><path d="M327.5 502 V551 M577.5 502 V551 M328 550.5 H577" stroke="#008080" stroke-opacity="0.42" stroke-width="1" fill="none"/><path d="M611.2 276.5 L609.5 283 L613 283 Z M611.2 513 L609.5 506.5 L613 506.5 Z" fill="#006e6e"/><path d="M327.5 550.5 L334 549 L334 552 Z M577.5 550.5 L571 549 L571 552 Z" fill="#006e6e" opacity="0.8"/><text x="452.2" y="550.8" text-anchor="middle" font-family="Liberation Sans" font-size="9.6" fill="#2a8f8f">220</text><text transform="translate(602.4 394.5) rotate(-90) scale(1 -1)" text-anchor="middle" font-family="Liberation Sans" font-size="9.6" fill="#2a8f8f">209</text><path d="M279.5 662 V702" stroke="#e84040" stroke-width="1.2"/><path d="M259.5 682 H300" stroke="#e07070" stroke-width="1.3"/><path d="M545.5 577.5 H931 M545.5 577.5 V659 M545.5 591.5 H931 M545.5 613.5 H931 M715.5 636.5 H931 M579.5 577.5 V591.5 M618.5 577.5 V613.5 M817.5 577.5 V591.5 M674.5 591.5 V613.5 M761.5 591.5 V613.5 M818.5 591.5 V613.5 M886.5 591.5 V613.5 M715.5 613.5 V659 M852.5 636.5 V659 M886.5 636.5 V659" stroke="#333" stroke-width="0.9" fill="none"/><text x="548" y="586.5" font-family="Liberation Sans" font-size="5.5" fill="#111" text-anchor="start">Item ref</text><text x="583" y="586.5" font-family="Liberation Sans" font-size="5.5" fill="#111" text-anchor="start">Quantity</text><text x="621.5" y="586.5" font-family="Liberation Sans" font-size="5.6" fill="#111" text-anchor="start">Title/Name, destination, material, dimension etc</text><text x="822" y="586.5" font-family="Liberation Sans" font-size="5.5" fill="#111" text-anchor="start">Article No./Reference</text><text x="548" y="598.5" font-family="Liberation Sans" font-size="5.5" fill="#111" text-anchor="start">Designed by</text><text x="621.5" y="598.5" font-family="Liberation Sans" font-size="5.5" fill="#111" text-anchor="start">Checked by</text><text x="689" y="598.5" font-family="Liberation Sans" font-size="5.5" fill="#111" text-anchor="start">Approved by - date</text><text x="767" y="599.5" font-family="Liberation Sans" font-size="5.5" fill="#111" text-anchor="start">Filename</text><text x="811" y="609.5" font-family="Liberation Sans" font-size="6" fill="#111" text-anchor="end">file.dxf</text><text x="821" y="599.5" font-family="Liberation Sans" font-size="5.5" fill="#111" text-anchor="start">Date</text><text x="879.5" y="609.8" font-family="Liberation Sans" font-size="9.6" fill="#111" text-anchor="end">01/01/2025</text><text x="890" y="599.5" font-family="Liberation Sans" font-size="5.5" fill="#111" text-anchor="start">Scale</text><text x="925" y="609.8" font-family="Liberation Sans" font-size="9.3" fill="#111" text-anchor="end">1:2</text><text x="925.5" y="632.3" font-family="Liberation Sans" font-size="16" fill="#111" text-anchor="end">Pièces pour maison d&#39;oiseau</text><text x="856" y="645.3" font-family="Liberation Sans" font-size="5.5" fill="#111" text-anchor="start">Edition</text><text x="891" y="645.3" font-family="Liberation Sans" font-size="5.5" fill="#111" text-anchor="start">Sheet</text><text x="925" y="654.5" font-family="Liberation Sans" font-size="9.3" fill="#111" text-anchor="end">1/2</text><path d="M1118 171.5 L1128.5 167.3 M1035 219.5 L1044.5 215.5 M1020.5 228 L1030 297.5 M1085 240 L1093.5 253 M1087 239 L1095 251" fill="none" stroke="#2a2a2a" stroke-width="0.75"/><path d="M1056.2 211.7 V200 C1057 196.5, 1060.5 195, 1063 195.2 C1067.5 195.8, 1072 200, 1073 206.5 V209.3 M1059 197 C1064 196, 1069 199.5, 1070.8 205 V220.4 L1062.4 209.3 L1056.2 211.7" fill="none" stroke="#2a2a2a" stroke-width="0.75"/><ellipse cx="1063" cy="205.6" rx="1.4" ry="1.6" fill="none" stroke="#2a2a2a" stroke-width="0.75"/><ellipse cx="1063.6" cy="262.1" rx="14.3" ry="19.9" transform="rotate(-25 1063.6 262.1)" fill="none" stroke="#2a2a2a" stroke-width="0.75"/><ellipse cx="1063.6" cy="262.1" rx="12.6" ry="18" transform="rotate(-25 1063.6 262.1)" fill="none" stroke="#2a2a2a" stroke-width="0.75"/><path d="M1056.5 248.5 C1058 246, 1061.5 245.5, 1063.5 248.5 L1066 250.5 L1065 253 L1068.5 262 L1072 268 L1071 273 C1067 276, 1063 274.5, 1060 270 L1056 261 C1055 256, 1055 251, 1056.5 248.5 Z" fill="none" stroke="#2a2a2a" stroke-width="0.75"/><path d="M1050 266 L1058 276 M1052 270 L1060 278 M1055 273 L1062 279 M1058 276 L1065 280" fill="none" stroke="#333" stroke-width="0.6"/><path d="M1097 336 L1105.5 287 M1099.5 336.5 L1107.5 287.5 M1097 336 L1099.5 336.5 M1105.5 287 L1107.5 287.5" fill="none" stroke="#2a2a2a" stroke-width="0.75"/><circle cx="1097.5" cy="250" r="5" fill="none" stroke="#f0c040" stroke-width="0.9"/><text x="1105" y="268" font-family="Liberation Sans" font-size="14" fill="#f0b428">Grille</text></svg></div>
<div style="position:absolute;left:1139px;top:155px;width:16px;height:591px;background:#f7f7f7;border-right:2px solid #dcdcdc"></div>
<div style="position:absolute;left:1143px;top:313px;width:8px;height:264px;background:#7d7d7d;border-radius:4px"></div>
<div style="position:absolute;left:95px;top:732px;width:1044px;height:14px;background:#f7f7f7;border-top:1px solid #e8e8e8"></div>
<div style="position:absolute;left:231px;top:736px;width:717px;height:8px;background:#7d7d7d;border-radius:4px"></div>
<div style="position:absolute;left:1083px;top:732px;width:70px;height:15px;background:#ececec"></div>
<div class="t" style="left:553.5px;width:600px;text-align:right;top:734.30px;font-size:13px;line-height:13px;color:#111;">10 &lt; 100</div>
<div style="position:absolute;left:72px;top:746px;width:1083px;height:52px;background:#ececec"></div>
<div style="position:absolute;left:72px;top:747px;width:1083px;height:2px;background:#c8c8c8"></div>
<div style="position:absolute;left:73px;top:749px;width:1065px;height:21px;background:#fff;border-bottom:1px solid #cfcfcf"></div>
<div class="t" style="left:77.3px;top:751.30px;font-size:13px;line-height:13px;color:#1414d2;"><i>Commande:</i> vt</div>
<div style="position:absolute;left:1138px;top:749px;width:15px;height:21px;background:#f5f5f5;border-bottom:1px solid #cfcfcf"></div>
<div style="position:absolute;left:1142px;top:750px;width:8px;height:17px;background:#7d7d7d;border-radius:4px"></div>
<div class="t" style="left:73px;top:778.33px;font-size:13.2px;line-height:13.2px;color:#111;">Position :</div>
<div style="position:absolute;left:132px;top:776px;width:995px;height:18px;background:#fff"></div>
<div style="position:absolute;left:1127px;top:772px;width:26px;height:26px;background:linear-gradient(#f4f4f4,#e6e6e6);border:1px solid #b8b8b8"></div>
<svg style="position:absolute;left:1132px;top:779px;" width="16" height="12" viewBox="0 0 16 12"><rect x="1.5" y="1.5" width="13" height="9.5" fill="#ececec" stroke="#333" stroke-width="1"/><rect x="1" y="1" width="14" height="3" fill="#111"/></svg>
<div style="position:absolute;left:0px;top:798px;width:1500px;height:46px;background:#dcdcdc"></div>
<div class="t" style="left:3px;top:808.37px;font-size:10.2px;line-height:10.2px;color:#111;letter-spacing:0px">360,190</div>
<div class="t" style="left:3px;top:828.67px;font-size:10.2px;line-height:10.2px;color:#111;letter-spacing:0px">@-440,-310</div>
<div style="position:absolute;left:253px;top:801px;width:1px;height:40px;background:#777"></div>
<div class="t" style="left:256px;top:808.37px;font-size:10.2px;line-height:10.2px;color:#111;letter-spacing:0px">407.0626&lt;28°</div>
<div class="t" style="left:256px;top:828.67px;font-size:10.2px;line-height:10.2px;color:#111;letter-spacing:0px">@538.2379&lt;215°</div>
<div style="position:absolute;left:506px;top:819px;width:6px;height:6px;background:#c4c4c4;border-radius:3px"></div>
<div class="t" style="left:662px;top:818.37px;font-size:10.2px;line-height:10.2px;color:#111;letter-spacing:0.15px">Position</div>
<svg style="position:absolute;left:716px;top:805px;" width="20" height="32" viewBox="0 0 20 32"><rect x="1.5" y="1" width="17" height="30" rx="8.5" fill="#fff" stroke="#222" stroke-width="0.9"/><path d="M1.5 14.5 H18.5" stroke="#222" stroke-width="0.9"/><rect x="8" y="3.5" width="4" height="8" rx="2" fill="#fff" stroke="#222" stroke-width="0.9"/></svg>
<div class="t" style="left:754px;top:818.37px;font-size:10.2px;line-height:10.2px;color:#111;letter-spacing:0.15px">Annuler</div>
<div style="position:absolute;left:940px;top:819px;width:6px;height:6px;background:#c4c4c4;border-radius:3px"></div>
<div class="t" style="left:949.5px;top:818.37px;font-size:10.2px;line-height:10.2px;color:#111;letter-spacing:0px">Aucune des entités sélectionnées.</div>
<div style="position:absolute;left:1269px;top:819px;width:6px;height:6px;background:#c4c4c4;border-radius:3px"></div>
<div style="position:absolute;left:1155px;top:108px;width:300px;height:690px;background:#e6e6e6;border-left:1px solid #c6c6c6"></div>
<div style="position:absolute;left:1156px;top:108px;width:299px;height:22px;background:linear-gradient(to bottom,#efefef,#e0e0e0);border-bottom:1px solid #c8c8c8"></div>
<svg style="position:absolute;left:1157px;top:111.5px;" width="14" height="14" viewBox="0 0 14 14"><circle cx="7" cy="7" r="6.5" fill="#747474"/><path d="M4.3 4.3 L9.7 9.7 M9.7 4.3 L4.3 9.7" stroke="#fff" stroke-width="1.8"/></svg>
<svg style="position:absolute;left:1175px;top:111.5px;" width="14" height="14" viewBox="0 0 14 14"><circle cx="7" cy="7" r="6.5" fill="#747474"/><rect x="3.8" y="6" width="5" height="4" fill="none" stroke="#fff" stroke-width="1"/><path d="M5.5 6 V4.3 H10.3 V8 H8.8" fill="none" stroke="#fff" stroke-width="1"/></svg>
<div class="t" style="left:1022px;width:600px;text-align:center;top:113.31px;font-size:11.8px;line-height:11.8px;color:#333;letter-spacing:0.05px">Liste des blocs</div>
<div style="position:absolute;left:1156px;top:130px;width:299px;height:26px;background:#d4d4d4"></div>
<div style="position:absolute;left:1156px;top:130px;width:37px;height:26px;background:linear-gradient(to bottom,#fbfbfb,#ececec);border:1px solid #b9b9b9;border-right-color:#a8a8a8;border-bottom-color:#a8a8a8"></div>
<div style="position:absolute;left:1193px;top:130px;width:37px;height:26px;background:linear-gradient(to bottom,#fbfbfb,#ececec);border:1px solid #b9b9b9;border-right-color:#a8a8a8;border-bottom-color:#a8a8a8"></div>
<div style="position:absolute;left:1230px;top:130px;width:38px;height:26px;background:linear-gradient(to bottom,#fbfbfb,#ececec);border:1px solid #b9b9b9;border-right-color:#a8a8a8;border-bottom-color:#a8a8a8"></div>
<div style="position:absolute;left:1268px;top:130px;width:37px;height:26px;background:linear-gradient(to bottom,#fbfbfb,#ececec);border:1px solid #b9b9b9;border-right-color:#a8a8a8;border-bottom-color:#a8a8a8"></div>
<div style="position:absolute;left:1305px;top:130px;width:38px;height:26px;background:linear-gradient(to bottom,#fbfbfb,#ececec);border:1px solid #b9b9b9;border-right-color:#a8a8a8;border-bottom-color:#a8a8a8"></div>
<div style="position:absolute;left:1343px;top:130px;width:37px;height:26px;background:linear-gradient(to bottom,#fbfbfb,#ececec);border:1px solid #b9b9b9;border-right-color:#a8a8a8;border-bottom-color:#a8a8a8"></div>
<div style="position:absolute;left:1380px;top:130px;width:38px;height:26px;background:linear-gradient(to bottom,#fbfbfb,#ececec);border:1px solid #b9b9b9;border-right-color:#a8a8a8;border-bottom-color:#a8a8a8"></div>
<div style="position:absolute;left:1418px;top:130px;width:37px;height:26px;background:linear-gradient(to bottom,#fbfbfb,#ececec);border:1px solid #b9b9b9;border-right-color:#a8a8a8;border-bottom-color:#a8a8a8"></div>
<svg style="position:absolute;left:1166.0px;top:137.5px;" width="16.0" height="11.0" viewBox="0 0 16.0 11.0"><g transform="scale(1.0)"><path d="M0.3 5.6 C 3 1.2, 5.8 0.2, 8 0.2 C 10.2 0.2, 13 1.2, 15.7 5.6 C 13 9.8, 10.2 10.8, 8 10.8 C 5.8 10.8, 3 9.8, 0.3 5.6 Z" fill="#000"/><path d="M2.6 5.8 C 4.5 3.2, 6.3 2.4, 8 2.4 C 9.7 2.4, 11.5 3.2, 13.4 5.8 C 11.5 8.2, 9.7 8.9, 8 8.9 C 6.3 8.9, 4.5 8.2, 2.6 5.8 Z" fill="#fff"/><circle cx="8" cy="5.6" r="3.3" fill="#000"/><circle cx="6.9" cy="4.5" r="0.9" fill="#fff" opacity="0.7"/></g></svg>
<svg style="position:absolute;left:1203.0px;top:137.5px;" width="16.0" height="11.0" viewBox="0 0 16.0 11.0"><g transform="scale(1.0)"><path d="M0.3 5.6 C 3 1.2, 5.8 0.2, 8 0.2 C 10.2 0.2, 13 1.2, 15.7 5.6 C 13 9.8, 10.2 10.8, 8 10.8 C 5.8 10.8, 3 9.8, 0.3 5.6 Z" fill="#a8a8a8"/><path d="M2.6 5.8 C 4.5 3.2, 6.3 2.4, 8 2.4 C 9.7 2.4, 11.5 3.2, 13.4 5.8 C 11.5 8.2, 9.7 8.9, 8 8.9 C 6.3 8.9, 4.5 8.2, 2.6 5.8 Z" fill="#fff"/><circle cx="8" cy="5.6" r="3.3" fill="#a8a8a8"/><circle cx="6.9" cy="4.5" r="0.9" fill="#fff" opacity="0.7"/></g></svg>
<svg style="position:absolute;left:1240px;top:134px;" width="18" height="18" viewBox="0 0 18 18"><path d="M9 2.5 V15.5 M2.5 9 H15.5" stroke="#e01010" stroke-width="3.3"/></svg>
<svg style="position:absolute;left:1277px;top:134px;" width="18" height="18" viewBox="0 0 18 18"><path d="M2.5 9 H15.5" stroke="#e01010" stroke-width="3.3"/></svg>
<svg style="position:absolute;left:1313px;top:134px;" width="22" height="18" viewBox="0 0 22 18"><text x="2" y="13.5" font-family="Liberation Sans" font-size="12" fill="#111">a</text><text x="13" y="13.5" font-family="Liberation Sans" font-size="12" fill="#111">b</text><path d="M10.8 2.5 V15.5" stroke="#111" stroke-width="0.9"/></svg>
<svg style="position:absolute;left:1352.45px;top:134.45px;" width="17.099999999999998" height="17.099999999999998" viewBox="0 0 17.099999999999998 17.099999999999998"><g transform="scale(0.95)" opacity="1.0"><path d="M3 14 L13 3 L16 6 L6 16 Z" fill="#f0a830" stroke="#8a5a10" stroke-width="0.8"/><path d="M13 3 L14.5 1.5 L17.5 4.5 L16 6 Z" fill="#e04040" stroke="#8a2a10" stroke-width="0.6"/><path d="M3 14 L6 16 L1.5 17 Z" fill="#f0d8a8" stroke="#8a5a10" stroke-width="0.6"/><path d="M1.5 17 L2.5 16.5 L2 15.8 Z" fill="#222"/></g></svg>
<svg style="position:absolute;left:1390px;top:134px;" width="18" height="18" viewBox="0 0 18 18"><rect x="3" y="1" width="12" height="16" fill="#eef2fb" stroke="#d8deea"/><path d="M6 4 H10 V12 M7.5 10 L10 13.5 L12.5 10" fill="none" stroke="#7aa0f0" stroke-width="1.8"/></svg>
<svg style="position:absolute;left:1427px;top:134px;" width="18" height="18" viewBox="0 0 18 18"><rect x="2.5" y="2.5" width="13" height="13" fill="#ee7a5a" stroke="#d84a2a" stroke-width="1"/><path d="M6 6 L12 12 M12 6 L6 12" stroke="#fff" stroke-width="1.6"/></svg>
<div style="position:absolute;left:1156px;top:156px;width:299px;height:169px;background:#fff;border-bottom:1px solid #c9c9c9"></div>
<div style="position:absolute;left:1156px;top:197px;width:298px;height:20px;background:#d5d5d5"></div>
<svg style="position:absolute;left:1160.5px;top:161.84375px;" width="15.0" height="10.3125" viewBox="0 0 15.0 10.3125"><g transform="scale(0.9375)"><path d="M0.3 5.6 C 3 1.2, 5.8 0.2, 8 0.2 C 10.2 0.2, 13 1.2, 15.7 5.6 C 13 9.8, 10.2 10.8, 8 10.8 C 5.8 10.8, 3 9.8, 0.3 5.6 Z" fill="#000"/><path d="M2.6 5.8 C 4.5 3.2, 6.3 2.4, 8 2.4 C 9.7 2.4, 11.5 3.2, 13.4 5.8 C 11.5 8.2, 9.7 8.9, 8 8.9 C 6.3 8.9, 4.5 8.2, 2.6 5.8 Z" fill="#fff"/><circle cx="8" cy="5.6" r="3.3" fill="#000"/><circle cx="6.9" cy="4.5" r="0.9" fill="#fff" opacity="0.7"/></g></svg>
<div class="t" style="left:1205.3px;top:160.66px;font-size:13.4px;line-height:13.4px;color:#111;">Model (*Model_Space)</div>
<svg style="position:absolute;left:1160.5px;top:181.84375px;" width="15.0" height="10.3125" viewBox="0 0 15.0 10.3125"><g transform="scale(0.9375)"><path d="M0.3 5.6 C 3 1.2, 5.8 0.2, 8 0.2 C 10.2 0.2, 13 1.2, 15.7 5.6 C 13 9.8, 10.2 10.8, 8 10.8 C 5.8 10.8, 3 9.8, 0.3 5.6 Z" fill="#000"/><path d="M2.6 5.8 C 4.5 3.2, 6.3 2.4, 8 2.4 C 9.7 2.4, 11.5 3.2, 13.4 5.8 C 11.5 8.2, 9.7 8.9, 8 8.9 C 6.3 8.9, 4.5 8.2, 2.6 5.8 Z" fill="#fff"/><circle cx="8" cy="5.6" r="3.3" fill="#000"/><circle cx="6.9" cy="4.5" r="0.9" fill="#fff" opacity="0.7"/></g></svg>
<div class="t" style="left:1205.3px;top:180.66px;font-size:13.4px;line-height:13.4px;color:#111;">Layout1 (*Paper_Space)</div>
<svg style="position:absolute;left:1160.5px;top:201.84375px;" width="15.0" height="10.3125" viewBox="0 0 15.0 10.3125"><g transform="scale(0.9375)"><path d="M0.3 5.6 C 3 1.2, 5.8 0.2, 8 0.2 C 10.2 0.2, 13 1.2, 15.7 5.6 C 13 9.8, 10.2 10.8, 8 10.8 C 5.8 10.8, 3 9.8, 0.3 5.6 Z" fill="#2a3a55"/><path d="M2.6 5.8 C 4.5 3.2, 6.3 2.4, 8 2.4 C 9.7 2.4, 11.5 3.2, 13.4 5.8 C 11.5 8.2, 9.7 8.9, 8 8.9 C 6.3 8.9, 4.5 8.2, 2.6 5.8 Z" fill="#fff"/><circle cx="8" cy="5.6" r="3.3" fill="#2a3a55"/><circle cx="6.9" cy="4.5" r="0.9" fill="#fff" opacity="0.7"/></g></svg>
<div class="t" style="left:1205.3px;top:200.66px;font-size:13.4px;line-height:13.4px;color:#111;">Layout2 (*Paper_Space0)</div>
<svg style="position:absolute;left:1160.5px;top:221.84375px;" width="15.0" height="10.3125" viewBox="0 0 15.0 10.3125"><g transform="scale(0.9375)"><path d="M0.3 5.6 C 3 1.2, 5.8 0.2, 8 0.2 C 10.2 0.2, 13 1.2, 15.7 5.6 C 13 9.8, 10.2 10.8, 8 10.8 C 5.8 10.8, 3 9.8, 0.3 5.6 Z" fill="#000"/><path d="M2.6 5.8 C 4.5 3.2, 6.3 2.4, 8 2.4 C 9.7 2.4, 11.5 3.2, 13.4 5.8 C 11.5 8.2, 9.7 8.9, 8 8.9 C 6.3 8.9, 4.5 8.2, 2.6 5.8 Z" fill="#fff"/><circle cx="8" cy="5.6" r="3.3" fill="#000"/><circle cx="6.9" cy="4.5" r="0.9" fill="#fff" opacity="0.7"/></g></svg>
<div class="t" style="left:1205.3px;top:220.66px;font-size:13.4px;line-height:13.4px;color:#111;">Bordure</div>
<svg style="position:absolute;left:1182.85px;top:199.35px;" width="15.299999999999999" height="15.299999999999999" viewBox="0 0 15.299999999999999 15.299999999999999"><g transform="scale(0.85)" opacity="0.85"><path d="M3 14 L13 3 L16 6 L6 16 Z" fill="#f0a830" stroke="#8a5a10" stroke-width="0.8"/><path d="M13 3 L14.5 1.5 L17.5 4.5 L16 6 Z" fill="#e04040" stroke="#8a2a10" stroke-width="0.6"/><path d="M3 14 L6 16 L1.5 17 Z" fill="#f0d8a8" stroke="#8a5a10" stroke-width="0.6"/><path d="M1.5 17 L2.5 16.5 L2 15.8 Z" fill="#222"/></g></svg>
<div style="position:absolute;left:1156px;top:325px;width:299px;height:23px;background:linear-gradient(to bottom,#efefef,#e0e0e0);border-bottom:1px solid #c8c8c8"></div>
<svg style="position:absolute;left:1157px;top:329.3px;" width="14" height="14" viewBox="0 0 14 14"><circle cx="7" cy="7" r="6.5" fill="#747474"/><path d="M4.3 4.3 L9.7 9.7 M9.7 4.3 L4.3 9.7" stroke="#fff" stroke-width="1.8"/></svg>
<svg style="position:absolute;left:1175px;top:329.3px;" width="14" height="14" viewBox="0 0 14 14"><circle cx="7" cy="7" r="6.5" fill="#747474"/><rect x="3.8" y="6" width="5" height="4" fill="none" stroke="#fff" stroke-width="1"/><path d="M5.5 6 V4.3 H10.3 V8 H8.8" fill="none" stroke="#fff" stroke-width="1"/></svg>
<div class="t" style="left:1022px;width:600px;text-align:center;top:331.10px;font-size:11.7px;line-height:11.7px;color:#333;letter-spacing:0.05px">Liste des calques</div>
<div style="position:absolute;left:1156px;top:348px;width:60px;height:26px;background:linear-gradient(to bottom,#fbfbfb,#ececec);border:1px solid #b9b9b9;border-right-color:#a8a8a8;border-bottom-color:#a8a8a8"></div>
<div style="position:absolute;left:1216px;top:348px;width:60px;height:26px;background:linear-gradient(to bottom,#fbfbfb,#ececec);border:1px solid #b9b9b9;border-right-color:#a8a8a8;border-bottom-color:#a8a8a8"></div>
<div style="position:absolute;left:1276px;top:348px;width:60px;height:26px;background:linear-gradient(to bottom,#fbfbfb,#ececec);border:1px solid #b9b9b9;border-right-color:#a8a8a8;border-bottom-color:#a8a8a8"></div>
<div style="position:absolute;left:1336px;top:348px;width:60px;height:26px;background:linear-gradient(to bottom,#fbfbfb,#ececec);border:1px solid #b9b9b9;border-right-color:#a8a8a8;border-bottom-color:#a8a8a8"></div>
<div style="position:absolute;left:1396px;top:348px;width:59px;height:26px;background:linear-gradient(to bottom,#fbfbfb,#ececec);border:1px solid #b9b9b9;border-right-color:#a8a8a8;border-bottom-color:#a8a8a8"></div>
<svg style="position:absolute;left:1177.0px;top:355.5px;" width="16.0" height="11.0" viewBox="0 0 16.0 11.0"><g transform="scale(1.0)"><path d="M0.3 5.6 C 3 1.2, 5.8 0.2, 8 0.2 C 10.2 0.2, 13 1.2, 15.7 5.6 C 13 9.8, 10.2 10.8, 8 10.8 C 5.8 10.8, 3 9.8, 0.3 5.6 Z" fill="#000"/><path d="M2.6 5.8 C 4.5 3.2, 6.3 2.4, 8 2.4 C 9.7 2.4, 11.5 3.2, 13.4 5.8 C 11.5 8.2, 9.7 8.9, 8 8.9 C 6.3 8.9, 4.5 8.2, 2.6 5.8 Z" fill="#fff"/><circle cx="8" cy="5.6" r="3.3" fill="#000"/><circle cx="6.9" cy="4.5" r="0.9" fill="#fff" opacity="0.7"/></g></svg>
<svg style="position:absolute;left:1237.0px;top:355.5px;" width="16.0" height="11.0" viewBox="0 0 16.0 11.0"><g transform="scale(1.0)"><path d="M0.3 5.6 C 3 1.2, 5.8 0.2, 8 0.2 C 10.2 0.2, 13 1.2, 15.7 5.6 C 13 9.8, 10.2 10.8, 8 10.8 C 5.8 10.8, 3 9.8, 0.3 5.6 Z" fill="#a8a8a8"/><path d="M2.6 5.8 C 4.5 3.2, 6.3 2.4, 8 2.4 C 9.7 2.4, 11.5 3.2, 13.4 5.8 C 11.5 8.2, 9.7 8.9, 8 8.9 C 6.3 8.9, 4.5 8.2, 2.6 5.8 Z" fill="#fff"/><circle cx="8" cy="5.6" r="3.3" fill="#a8a8a8"/><circle cx="6.9" cy="4.5" r="0.9" fill="#fff" opacity="0.7"/></g></svg>
<svg style="position:absolute;left:1296px;top:352px;" width="18" height="18" viewBox="0 0 18 18"><path d="M9 2.5 V15.5 M2.5 9 H15.5" stroke="#e01010" stroke-width="3.3"/></svg>
<svg style="position:absolute;left:1356px;top:352px;" width="18" height="18" viewBox="0 0 18 18"><path d="M2.5 9 H15.5" stroke="#e01010" stroke-width="3.3"/></svg>
<svg style="position:absolute;left:1416.45px;top:352.45px;" width="17.099999999999998" height="17.099999999999998" viewBox="0 0 17.099999999999998 17.099999999999998"><g transform="scale(0.95)" opacity="1.0"><path d="M3 14 L13 3 L16 6 L6 16 Z" fill="#f0a830" stroke="#8a5a10" stroke-width="0.8"/><path d="M13 3 L14.5 1.5 L17.5 4.5 L16 6 Z" fill="#e04040" stroke="#8a2a10" stroke-width="0.6"/><path d="M3 14 L6 16 L1.5 17 Z" fill="#f0d8a8" stroke="#8a5a10" stroke-width="0.6"/><path d="M1.5 17 L2.5 16.5 L2 15.8 Z" fill="#222"/></g></svg>
<div style="position:absolute;left:1156px;top:374px;width:299px;height:424px;background:#fff"></div>
<div style="position:absolute;left:1156px;top:475px;width:298px;height:20px;background:#0a4fda"></div>
<div style="position:absolute;left:1160.5px;top:380.5px;width:17px;height:10px;background:#000;border:1px solid #111"></div>
<div class="t" style="left:1183px;top:378.66px;font-size:13.4px;line-height:13.4px;color:#111;">0</div>
<svg style="position:absolute;left:1415.5px;top:379.84375px;" width="15.0" height="10.3125" viewBox="0 0 15.0 10.3125"><g transform="scale(0.9375)"><path d="M0.3 5.6 C 3 1.2, 5.8 0.2, 8 0.2 C 10.2 0.2, 13 1.2, 15.7 5.6 C 13 9.8, 10.2 10.8, 8 10.8 C 5.8 10.8, 3 9.8, 0.3 5.6 Z" fill="#000"/><path d="M2.6 5.8 C 4.5 3.2, 6.3 2.4, 8 2.4 C 9.7 2.4, 11.5 3.2, 13.4 5.8 C 11.5 8.2, 9.7 8.9, 8 8.9 C 6.3 8.9, 4.5 8.2, 2.6 5.8 Z" fill="#fff"/><circle cx="8" cy="5.6" r="3.3" fill="#000"/><circle cx="6.9" cy="4.5" r="0.9" fill="#fff" opacity="0.7"/></g></svg>
<svg style="position:absolute;left:1439px;top:378px;" width="12" height="15" viewBox="0 0 12 15"><path d="M3 7 V4.5 A3 3 0 0 1 9 4.5 V7" fill="none" stroke="#c4c4c4" stroke-width="1.6"/><rect x="1.5" y="6.5" width="9" height="7.5" rx="1" fill="#c4c4c4"/></svg>
<div style="position:absolute;left:1160.5px;top:400.5px;width:17px;height:10px;background:#000;border:1px solid #111"></div>
<div class="t" style="left:1183px;top:398.66px;font-size:13.4px;line-height:13.4px;color:#111;">Bordure</div>
<svg style="position:absolute;left:1415.5px;top:399.84375px;" width="15.0" height="10.3125" viewBox="0 0 15.0 10.3125"><g transform="scale(0.9375)"><path d="M0.3 5.6 C 3 1.2, 5.8 0.2, 8 0.2 C 10.2 0.2, 13 1.2, 15.7 5.6 C 13 9.8, 10.2 10.8, 8 10.8 C 5.8 10.8, 3 9.8, 0.3 5.6 Z" fill="#000"/><path d="M2.6 5.8 C 4.5 3.2, 6.3 2.4, 8 2.4 C 9.7 2.4, 11.5 3.2, 13.4 5.8 C 11.5 8.2, 9.7 8.9, 8 8.9 C 6.3 8.9, 4.5 8.2, 2.6 5.8 Z" fill="#fff"/><circle cx="8" cy="5.6" r="3.3" fill="#000"/><circle cx="6.9" cy="4.5" r="0.9" fill="#fff" opacity="0.7"/></g></svg>
<svg style="position:absolute;left:1439px;top:398px;" width="12" height="15" viewBox="0 0 12 15"><path d="M3 7 V4.5 A3 3 0 0 1 9 4.5 V7" fill="none" stroke="#c4c4c4" stroke-width="1.6"/><rect x="1.5" y="6.5" width="9" height="7.5" rx="1" fill="#c4c4c4"/></svg>
<div style="position:absolute;left:1160.5px;top:420.5px;width:17px;height:10px;background:#f00;border:1px solid #111"></div>
<div class="t" style="left:1183px;top:418.66px;font-size:13.4px;line-height:13.4px;color:#111;">Centre</div>
<svg style="position:absolute;left:1415.5px;top:419.84375px;" width="15.0" height="10.3125" viewBox="0 0 15.0 10.3125"><g transform="scale(0.9375)"><path d="M0.3 5.6 C 3 1.2, 5.8 0.2, 8 0.2 C 10.2 0.2, 13 1.2, 15.7 5.6 C 13 9.8, 10.2 10.8, 8 10.8 C 5.8 10.8, 3 9.8, 0.3 5.6 Z" fill="#000"/><path d="M2.6 5.8 C 4.5 3.2, 6.3 2.4, 8 2.4 C 9.7 2.4, 11.5 3.2, 13.4 5.8 C 11.5 8.2, 9.7 8.9, 8 8.9 C 6.3 8.9, 4.5 8.2, 2.6 5.8 Z" fill="#fff"/><circle cx="8" cy="5.6" r="3.3" fill="#000"/><circle cx="6.9" cy="4.5" r="0.9" fill="#fff" opacity="0.7"/></g></svg>
<svg style="position:absolute;left:1439px;top:418px;" width="12" height="15" viewBox="0 0 12 15"><path d="M3 7 V4.5 A3 3 0 0 1 9 4.5 V7" fill="none" stroke="#c4c4c4" stroke-width="1.6"/><rect x="1.5" y="6.5" width="9" height="7.5" rx="1" fill="#c4c4c4"/></svg>
<div style="position:absolute;left:1160.5px;top:440.5px;width:17px;height:10px;background:#008080;border:1px solid #111"></div>
<div class="t" style="left:1183px;top:438.66px;font-size:13.4px;line-height:13.4px;color:#111;">Cotations</div>
<svg style="position:absolute;left:1415.5px;top:439.84375px;" width="15.0" height="10.3125" viewBox="0 0 15.0 10.3125"><g transform="scale(0.9375)"><path d="M0.3 5.6 C 3 1.2, 5.8 0.2, 8 0.2 C 10.2 0.2, 13 1.2, 15.7 5.6 C 13 9.8, 10.2 10.8, 8 10.8 C 5.8 10.8, 3 9.8, 0.3 5.6 Z" fill="#000"/><path d="M2.6 5.8 C 4.5 3.2, 6.3 2.4, 8 2.4 C 9.7 2.4, 11.5 3.2, 13.4 5.8 C 11.5 8.2, 9.7 8.9, 8 8.9 C 6.3 8.9, 4.5 8.2, 2.6 5.8 Z" fill="#fff"/><circle cx="8" cy="5.6" r="3.3" fill="#000"/><circle cx="6.9" cy="4.5" r="0.9" fill="#fff" opacity="0.7"/></g></svg>
<svg style="position:absolute;left:1439px;top:438px;" width="12" height="15" viewBox="0 0 12 15"><path d="M3 7 V4.5 A3 3 0 0 1 9 4.5 V7" fill="none" stroke="#c4c4c4" stroke-width="1.6"/><rect x="1.5" y="6.5" width="9" height="7.5" rx="1" fill="#c4c4c4"/></svg>
<div style="position:absolute;left:1160.5px;top:460.5px;width:17px;height:10px;background:#fff;border:1px solid #111"></div>
<div class="t" style="left:1183px;top:458.66px;font-size:13.4px;line-height:13.4px;color:#111;">Defpoints</div>
<svg style="position:absolute;left:1415.5px;top:459.84375px;" width="15.0" height="10.3125" viewBox="0 0 15.0 10.3125"><g transform="scale(0.9375)"><path d="M0.3 5.6 C 3 1.2, 5.8 0.2, 8 0.2 C 10.2 0.2, 13 1.2, 15.7 5.6 C 13 9.8, 10.2 10.8, 8 10.8 C 5.8 10.8, 3 9.8, 0.3 5.6 Z" fill="#000"/><path d="M2.6 5.8 C 4.5 3.2, 6.3 2.4, 8 2.4 C 9.7 2.4, 11.5 3.2, 13.4 5.8 C 11.5 8.2, 9.7 8.9, 8 8.9 C 6.3 8.9, 4.5 8.2, 2.6 5.8 Z" fill="#fff"/><circle cx="8" cy="5.6" r="3.3" fill="#000"/><circle cx="6.9" cy="4.5" r="0.9" fill="#fff" opacity="0.7"/></g></svg>
<svg style="position:absolute;left:1439px;top:458px;" width="12" height="15" viewBox="0 0 12 15"><path d="M3 7 V4.5 A3 3 0 0 1 9 4.5 V7" fill="none" stroke="#c4c4c4" stroke-width="1.6"/><rect x="1.5" y="6.5" width="9" height="7.5" rx="1" fill="#c4c4c4"/></svg>
<div style="position:absolute;left:1160.5px;top:480.5px;width:17px;height:10px;background:#e040f0;border:1px solid #111"></div>
<div class="t" style="left:1183px;top:478.66px;font-size:13.4px;line-height:13.4px;color:#fff;">Fenêtres de présentation</div>
<svg style="position:absolute;left:1415.5px;top:479.84375px;" width="15.0" height="10.3125" viewBox="0 0 15.0 10.3125"><g transform="scale(0.9375)"><path d="M0.3 5.6 C 3 1.2, 5.8 0.2, 8 0.2 C 10.2 0.2, 13 1.2, 15.7 5.6 C 13 9.8, 10.2 10.8, 8 10.8 C 5.8 10.8, 3 9.8, 0.3 5.6 Z" fill="#1a2f6a"/><path d="M2.6 5.8 C 4.5 3.2, 6.3 2.4, 8 2.4 C 9.7 2.4, 11.5 3.2, 13.4 5.8 C 11.5 8.2, 9.7 8.9, 8 8.9 C 6.3 8.9, 4.5 8.2, 2.6 5.8 Z" fill="#2e4f9e"/><circle cx="8" cy="5.6" r="3.3" fill="#1a2f6a"/><circle cx="6.9" cy="4.5" r="0.9" fill="#fff" opacity="0.7"/></g></svg>
<svg style="position:absolute;left:1439px;top:478px;" width="12" height="15" viewBox="0 0 12 15"><path d="M3 7 V4.5 A3 3 0 0 1 9 4.5 V7" fill="none" stroke="#b9c4e0" stroke-width="1.6"/><rect x="1.5" y="6.5" width="9" height="7.5" rx="1" fill="#b9c4e0"/></svg>
<div style="position:absolute;left:1160.5px;top:500.5px;width:17px;height:10px;background:#000;border:1px solid #111"></div>
<div class="t" style="left:1183px;top:498.66px;font-size:13.4px;line-height:13.4px;color:#111;">Visible</div>
<svg style="position:absolute;left:1415.5px;top:499.84375px;" width="15.0" height="10.3125" viewBox="0 0 15.0 10.3125"><g transform="scale(0.9375)"><path d="M0.3 5.6 C 3 1.2, 5.8 0.2, 8 0.2 C 10.2 0.2, 13 1.2, 15.7 5.6 C 13 9.8, 10.2 10.8, 8 10.8 C 5.8 10.8, 3 9.8, 0.3 5.6 Z" fill="#000"/><path d="M2.6 5.8 C 4.5 3.2, 6.3 2.4, 8 2.4 C 9.7 2.4, 11.5 3.2, 13.4 5.8 C 11.5 8.2, 9.7 8.9, 8 8.9 C 6.3 8.9, 4.5 8.2, 2.6 5.8 Z" fill="#fff"/><circle cx="8" cy="5.6" r="3.3" fill="#000"/><circle cx="6.9" cy="4.5" r="0.9" fill="#fff" opacity="0.7"/></g></svg>
<svg style="position:absolute;left:1439px;top:498px;" width="12" height="15" viewBox="0 0 12 15"><path d="M3 7 V4.5 A3 3 0 0 1 9 4.5 V7" fill="none" stroke="#c4c4c4" stroke-width="1.6"/><rect x="1.5" y="6.5" width="9" height="7.5" rx="1" fill="#c4c4c4"/></svg>
<svg style="position:absolute;left:1393.35px;top:477.35px;" width="15.299999999999999" height="15.299999999999999" viewBox="0 0 15.299999999999999 15.299999999999999"><g transform="scale(0.85)" opacity="1.0"><path d="M3 14 L13 3 L16 6 L6 16 Z" fill="#f0a830" stroke="#8a5a10" stroke-width="0.8"/><path d="M13 3 L14.5 1.5 L17.5 4.5 L16 6 Z" fill="#e04040" stroke="#8a2a10" stroke-width="0.6"/><path d="M3 14 L6 16 L1.5 17 Z" fill="#f0d8a8" stroke="#8a5a10" stroke-width="0.6"/><path d="M1.5 17 L2.5 16.5 L2 15.8 Z" fill="#222"/></g></svg>
<div style="position:absolute;left:1455px;top:108px;width:45px;height:690px;background:linear-gradient(to right,#ececec,#dedede 55%,#c2c2c2);border-left:1px solid #cdcdcd"></div>
<div style="position:absolute;left:1463px;top:116px;width:2px;height:2px;background:#a8a8a8"></div>
<div style="position:absolute;left:1469px;top:116px;width:2px;height:2px;background:#a8a8a8"></div>
<div style="position:absolute;left:1475px;top:116px;width:2px;height:2px;background:#a8a8a8"></div>
<div style="position:absolute;left:1481px;top:116px;width:2px;height:2px;background:#a8a8a8"></div>
<div style="position:absolute;left:1487px;top:116px;width:2px;height:2px;background:#a8a8a8"></div>
<div style="position:absolute;left:1457px;top:120px;width:41px;height:42px;background:#bdbdbd;border-radius:6px"></div>
<svg style="position:absolute;left:1463px;top:127px;" width="28" height="28" viewBox="0 0 28 28"><rect x="0.5" y="0.5" width="27" height="27" fill="#fff" stroke="#111" stroke-width="1"/><rect x="0.5" y="0.5" width="27" height="4.5" fill="#000"/><rect x="1.8" y="1.2" width="3" height="3" fill="#fff"/><path d="M8 10 L15 7 L15 21 L8 24 Z" fill="#bbb" stroke="#333" stroke-width="0.8"/><path d="M11 9 L18 6 L18 20 L11 23 Z" fill="#e0e0e0" stroke="#333" stroke-width="0.8"/><path d="M14 8 L21 5.5 L21 19 L14 22 Z" fill="#fff" stroke="#333" stroke-width="0.8"/><path d="M16 17 L19 9 L19.5 17 Z" fill="none" stroke="#e03030" stroke-width="0.8"/></svg>
<div style="position:absolute;left:1457px;top:168px;width:41px;height:42px;background:#bdbdbd;border-radius:6px"></div>
<svg style="position:absolute;left:1463px;top:174px;" width="28" height="28" viewBox="0 0 28 28"><rect x="0.5" y="0.5" width="27" height="27" fill="#fff" stroke="#111" stroke-width="1"/><rect x="0.5" y="0.5" width="27" height="4.5" fill="#000"/><rect x="1.8" y="1.2" width="3" height="3" fill="#fff"/><rect x="8" y="9" width="11" height="9" fill="#f6e8b0" stroke="#555" stroke-width="0.8"/><circle cx="18" cy="18" r="5" fill="#f6e8b0" fill-opacity="0.7" stroke="#555" stroke-width="0.8"/></svg>
<svg style="position:absolute;left:1463px;top:221px;" width="28" height="28" viewBox="0 0 28 28"><rect x="0.5" y="0.5" width="27" height="27" fill="#fff" stroke="#111" stroke-width="1"/><rect x="0.5" y="0.5" width="27" height="4.5" fill="#000"/><rect x="1.8" y="1.2" width="3" height="3" fill="#fff"/><rect x="6" y="11" width="16" height="11" rx="2" fill="#f4f4f4" stroke="#c8d4ea" stroke-width="1"/></svg>
<div style="position:absolute;left:1458px;top:262px;width:40px;height:1px;background:repeating-linear-gradient(to right,#777 0 1px,transparent 1px 3px)"></div>
<svg style="position:absolute;left:1463px;top:277px;" width="28" height="28" viewBox="0 0 28 28"><rect x="0.5" y="0.5" width="27" height="27" fill="#fff" stroke="#111" stroke-width="1"/><rect x="0.5" y="0.5" width="27" height="4.5" fill="#000"/><rect x="1.8" y="1.2" width="3" height="3" fill="#fff"/><rect x="5" y="9" width="3" height="3" fill="#000"/><rect x="5" y="15" width="3" height="3" fill="#000"/><rect x="5" y="21" width="3" height="3" fill="#000"/><rect x="11" y="9" width="13" height="3" fill="none" stroke="#222" stroke-width="0.8"/><rect x="11" y="15" width="13" height="3" fill="none" stroke="#222" stroke-width="0.8"/><rect x="11" y="21" width="13" height="3" fill="none" stroke="#222" stroke-width="0.8"/></svg>
<svg style="position:absolute;left:1463px;top:323px;" width="28" height="28" viewBox="0 0 28 28"><rect x="0.5" y="0.5" width="27" height="27" fill="#fff" stroke="#111" stroke-width="1"/><rect x="0.5" y="0.5" width="27" height="4.5" fill="#000"/><rect x="1.8" y="1.2" width="3" height="3" fill="#fff"/><path d="M7 10 H21 L16 17 V24 L12 22 V17 Z" fill="#ddd" stroke="#555" stroke-width="0.8"/></svg>
<svg style="position:absolute;left:1463px;top:369px;" width="28" height="28" viewBox="0 0 28 28"><rect x="0.5" y="0.5" width="27" height="27" fill="#fff" stroke="#111" stroke-width="1"/><rect x="0.5" y="0.5" width="27" height="4.5" fill="#000"/><rect x="1.8" y="1.2" width="3" height="3" fill="#fff"/><path d="M7 9 L12 13 H20 V21 H12 L7 25 Z" fill="#eee" stroke="#333" stroke-width="0.8"/><rect x="14" y="13" width="7" height="8" fill="#999"/><path d="M4 17 H25" stroke="#f08080" stroke-width="0.7" stroke-dasharray="1.5 1"/></svg>
<div style="position:absolute;left:1458px;top:411px;width:40px;height:1px;background:repeating-linear-gradient(to right,#777 0 1px,transparent 1px 3px)"></div>
<div style="position:absolute;left:1457px;top:419px;width:41px;height:41px;background:#bdbdbd;border-radius:6px"></div>
<svg style="position:absolute;left:1463px;top:425px;" width="28" height="28" viewBox="0 0 28 28"><rect x="0.5" y="0.5" width="27" height="27" fill="#fff" stroke="#111" stroke-width="1"/><rect x="0.5" y="0.5" width="27" height="4.5" fill="#000"/><rect x="1.8" y="1.2" width="3" height="3" fill="#fff"/><path d="M4 9 H20 M4 12 H18 M4 15 H20 M4 18 H18" stroke="#999" stroke-width="0.8"/><path d="M1 24 H27" stroke="#111" stroke-width="0.8"/><text x="2" y="27" font-family="Liberation Sans" font-size="3" fill="#111">c   command</text></svg>
<svg style="position:absolute;left:1463px;top:472px;" width="28" height="28" viewBox="0 0 28 28"><rect x="0.5" y="0.5" width="27" height="27" fill="#fff" stroke="#111" stroke-width="1"/><rect x="0.5" y="0.5" width="27" height="4.5" fill="#000"/><rect x="1.8" y="1.2" width="3" height="3" fill="#fff"/><rect x="8" y="9" width="13" height="16" rx="1" fill="#c08a3a" stroke="#7a5010" stroke-width="0.8"/><rect x="10" y="11" width="9" height="12" fill="#f4f4f4"/><rect x="11.5" y="7.5" width="6" height="3" fill="#888"/></svg>
<svg style="position:absolute;left:1124px;top:44px;" width="90" height="90" viewBox="0 0 90 90"><defs><radialGradient id="ovg" cx="0.5" cy="0.5" r="0.5"><stop offset="0" stop-color="#fff" stop-opacity="0.05"/><stop offset="0.7" stop-color="#fff" stop-opacity="0.1"/><stop offset="0.82" stop-color="#fff" stop-opacity="0.3"/><stop offset="0.86" stop-color="#fff" stop-opacity="0.1"/><stop offset="0.88" stop-color="#9bb3cf" stop-opacity="0.35"/><stop offset="0.94" stop-color="#9bb3cf" stop-opacity="0.6"/><stop offset="0.98" stop-color="#9bb3cf" stop-opacity="0.25"/><stop offset="1" stop-color="#9bb3cf" stop-opacity="0"/></radialGradient></defs><circle cx="44.7" cy="45" r="40" fill="url(#ovg)"/></svg>
<svg style="position:absolute;left:1168px;top:87px;" width="20" height="30" viewBox="0 0 20 30"><path d="M1.3 1.2 L1.3 22.5 L7 17.7 L12.4 27.3 L15.6 25.7 L10.3 16.1 L16.2 16.1 Z" fill="#fff" stroke="#000" stroke-width="1.1" stroke-linejoin="miter"/></svg></body></html>
